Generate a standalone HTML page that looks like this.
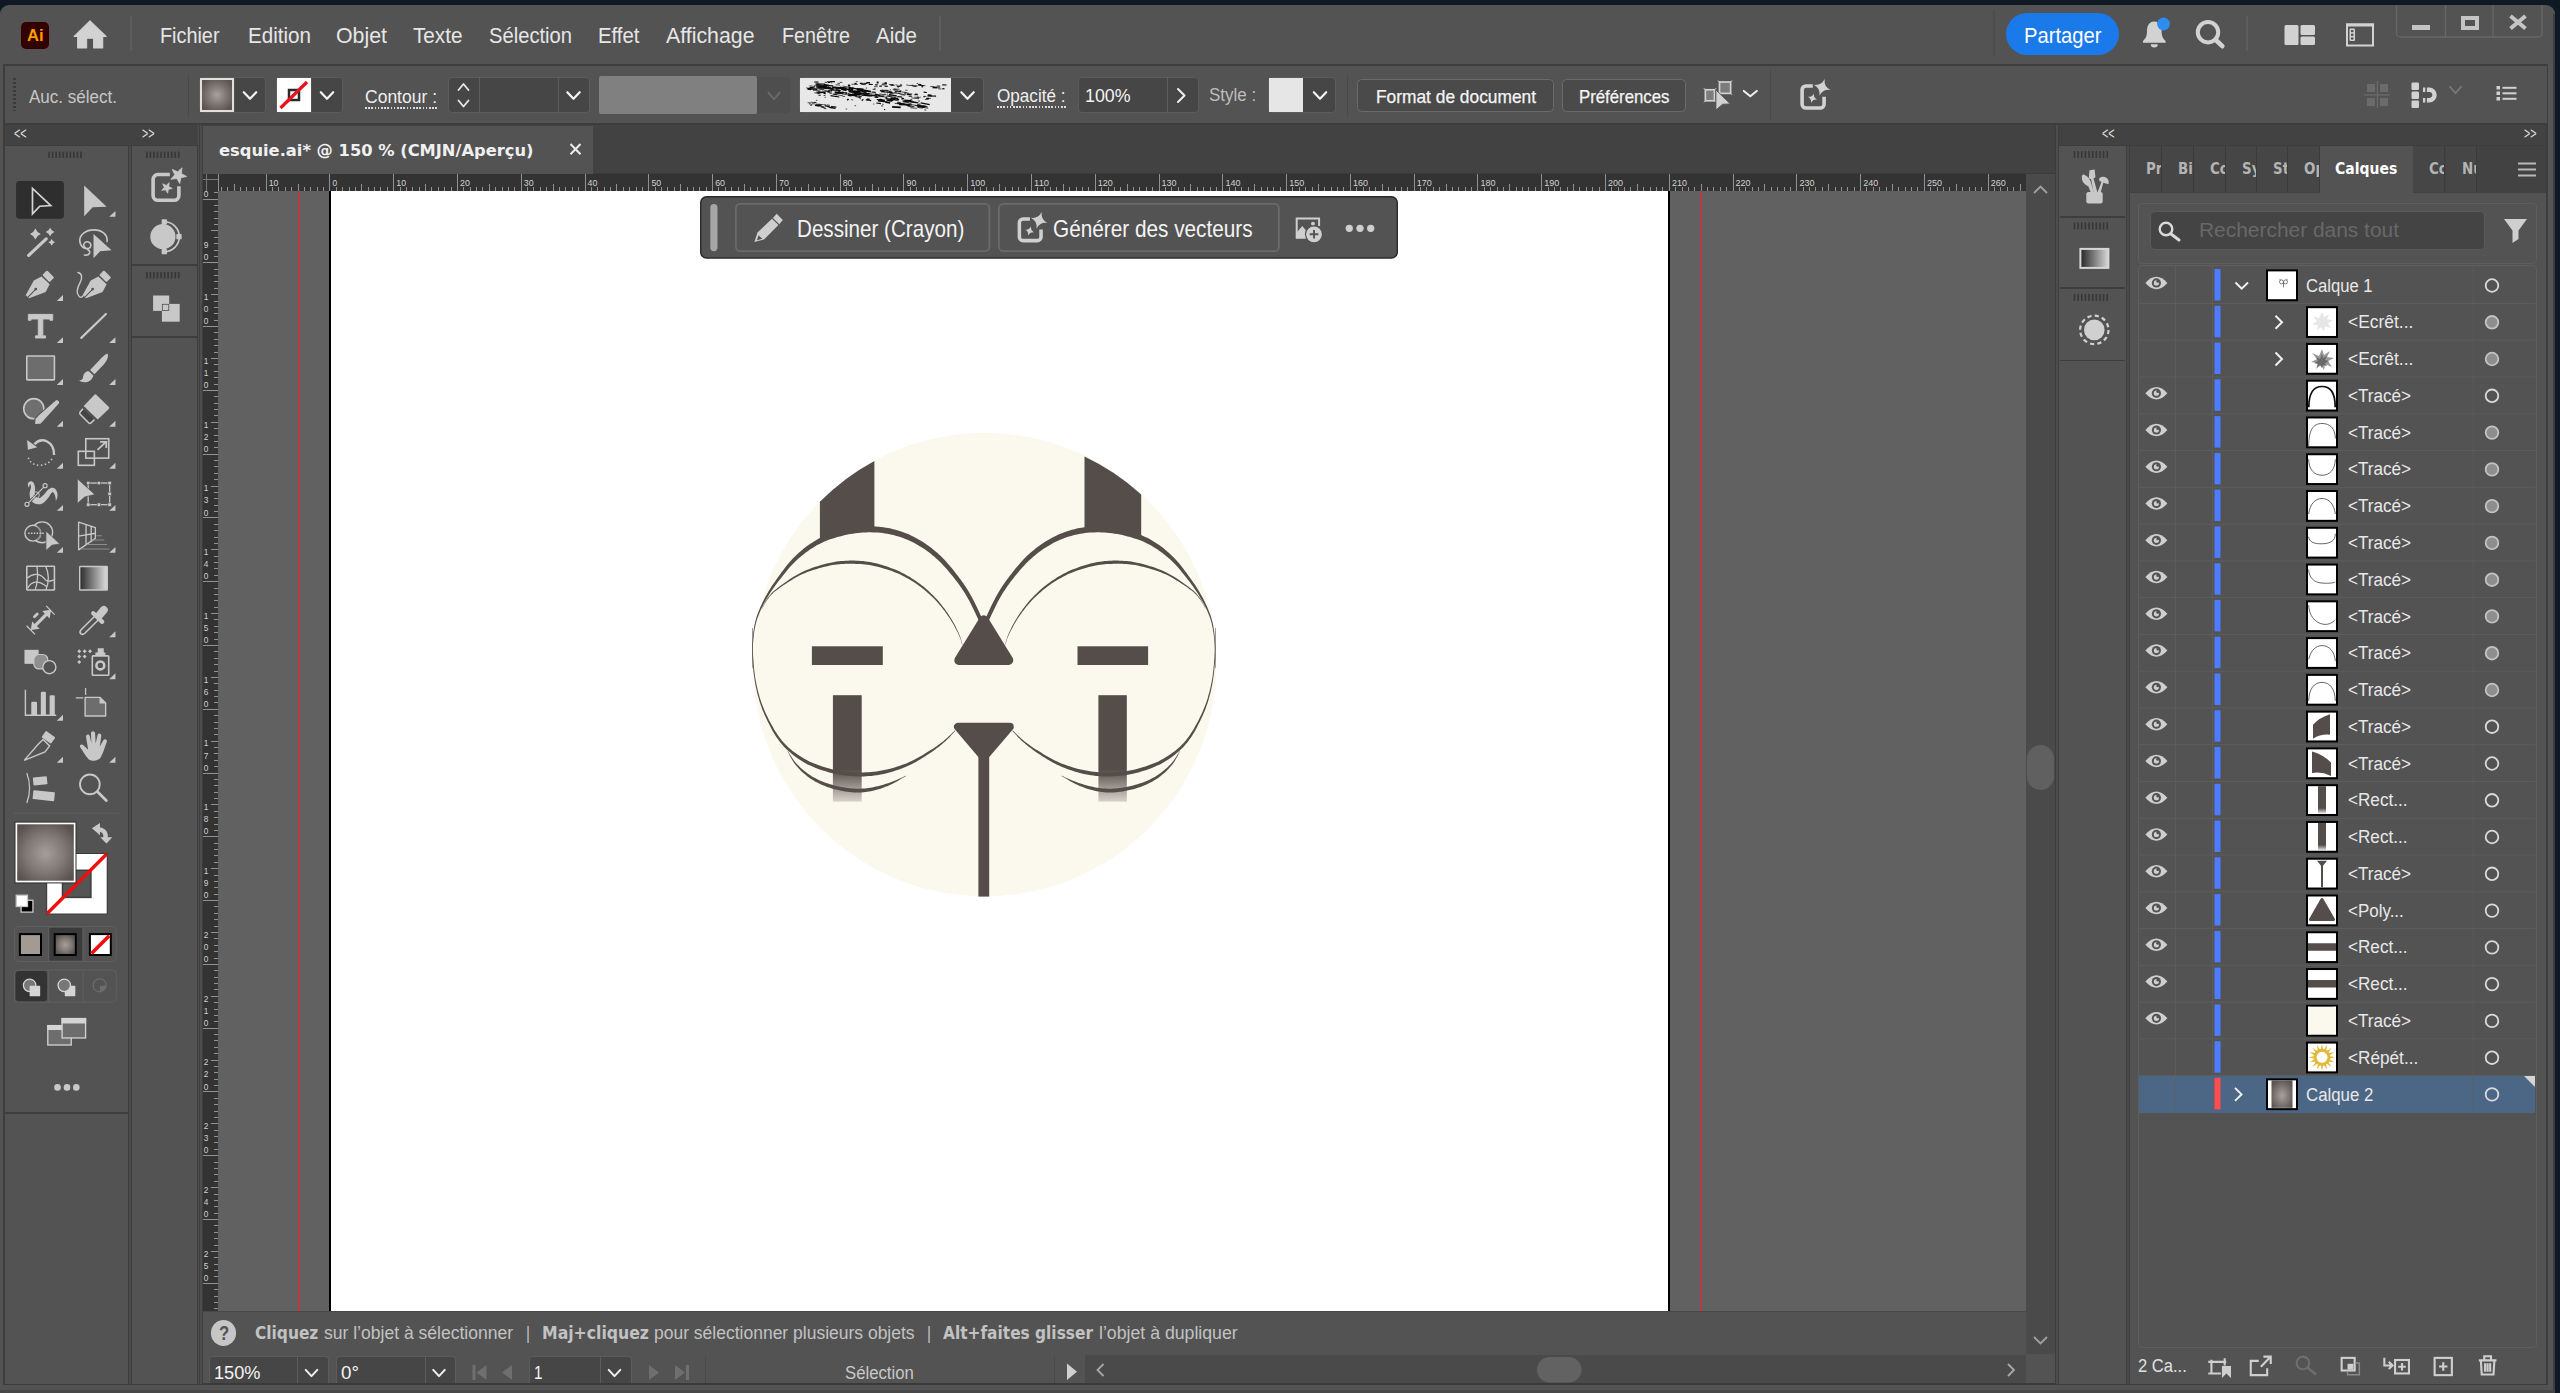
<!DOCTYPE html>
<html lang="fr"><head><meta charset="utf-8"><title>esquie.ai @ 150 % (CMJN/Aperçu)</title><style>
html,body{margin:0;padding:0;}
body{width:2560px;height:1393px;overflow:hidden;background:#535353;position:relative;font-family:"Liberation Sans",sans-serif;}
.a{position:absolute;box-sizing:border-box;}
.t{position:absolute;white-space:nowrap;transform-origin:0 0;display:block;font-family:"Liberation Sans",sans-serif;}
.d{font-family:"DejaVu Sans",sans-serif;}
.dc{font-family:"DejaVu Sans Condensed","DejaVu Sans",sans-serif;}
svg{position:absolute;overflow:visible;}
</style></head><body>
<!-- p_frame -->
<div class="a" style="left:0px;top:0px;width:2560px;height:1393px;background:#0f1923;"></div>
<div class="a" style="left:0px;top:5px;width:2555px;height:1388px;background:#535353;border-radius:9px 9px 0 0;"></div>
<div class="a" style="left:2553px;top:14px;width:2px;height:1379px;background:#3a3d41;"></div>
<div class="a" style="left:0px;top:1390px;width:2555px;height:3px;background:#474747;"></div>
<div class="a" style="left:3px;top:64px;width:2545px;height:1321px;background:#3d3d3d;"></div>
<div class="a" style="left:5px;top:66px;width:2542px;height:57px;background:#535353;"></div>
<div class="a" style="left:5px;top:125px;width:193px;height:20px;background:#424242;"></div>
<div class="a" style="left:5px;top:146px;width:123px;height:1238px;background:#535353;"></div>
<div class="a" style="left:5px;top:1112px;width:123px;height:2px;background:#3d3d3d;"></div>
<div class="a" style="left:128px;top:146px;width:4px;height:1238px;background:#4a4a4a;"></div>
<div class="a" style="left:128px;top:146px;width:1px;height:1238px;background:#3d3d3d;"></div>
<div class="a" style="left:131px;top:146px;width:1px;height:1238px;background:#3d3d3d;"></div>
<div class="a" style="left:132px;top:146px;width:65px;height:1238px;background:#535353;"></div>
<div class="a" style="left:132px;top:264px;width:65px;height:2px;background:#3d3d3d;"></div>
<div class="a" style="left:132px;top:336px;width:65px;height:2px;background:#3d3d3d;"></div>
<div class="a" style="left:198px;top:125px;width:5px;height:1259px;background:#4d4d4d;"></div>
<div class="a" style="left:198.5px;top:125px;width:1.5px;height:1259px;background:#3d3d3d;"></div>
<div class="a" style="left:201.5px;top:125px;width:1.5px;height:1259px;background:#3d3d3d;"></div>
<div class="a" style="left:203px;top:125px;width:1852px;height:48px;background:#424242;"></div>
<div class="a" style="left:203px;top:126px;width:390px;height:48px;background:#535353;"></div>
<div class="a" style="left:593px;top:172.5px;width:1462px;height:1.5px;background:#3a3a3a;"></div>
<div class="a" style="left:203px;top:174px;width:1823px;height:17px;background:#333;"></div>
<div class="a" style="left:203px;top:191px;width:15px;height:1120px;background:#333;"></div>
<div class="a" style="left:218px;top:191px;width:1808px;height:1120px;background:#616161;"></div>
<div class="a" style="left:2026px;top:174px;width:29px;height:1180px;background:#4a4a4a;"></div>
<div class="a" style="left:203px;top:1311px;width:1823px;height:43px;background:#535353;"></div>
<div class="a" style="left:203px;top:1311px;width:1823px;height:1px;background:#484848;"></div>
<div class="a" style="left:203px;top:1354px;width:1852px;height:29px;background:#535353;"></div>
<div class="a" style="left:2026px;top:1354px;width:29px;height:29px;background:#535353;"></div>
<div class="a" style="left:2055px;top:125px;width:4px;height:1259px;background:#4d4d4d;"></div>
<div class="a" style="left:2055px;top:125px;width:1px;height:1259px;background:#3d3d3d;"></div>
<div class="a" style="left:2058px;top:125px;width:1px;height:1259px;background:#3d3d3d;"></div>
<div class="a" style="left:2059px;top:125px;width:487px;height:20px;background:#424242;"></div>
<div class="a" style="left:2059px;top:146px;width:67px;height:1238px;background:#535353;"></div>
<div class="a" style="left:2126px;top:146px;width:4px;height:1238px;background:#4a4a4a;"></div>
<div class="a" style="left:2126px;top:146px;width:1px;height:1238px;background:#3d3d3d;"></div>
<div class="a" style="left:2129px;top:146px;width:1px;height:1238px;background:#3d3d3d;"></div>
<div class="a" style="left:2130px;top:146px;width:416px;height:47px;background:#424242;"></div>
<div class="a" style="left:2130px;top:193px;width:416px;height:1191px;background:#535353;"></div>
<div class="a" style="left:2548px;top:64px;width:5px;height:1326px;background:#555;"></div>
<!-- p_menu -->
<div class="a" style="left:21px;top:22px;width:28px;height:27px;background:#330000;border-radius:5px;"></div>
<span class="t" style="left:27px;top:27px;font-size:16.5px;line-height:16.5px;color:#ff9a00;font-weight:700;transform:scaleX(1.0000);">Ai</span>
<div class="a" style="left:130px;top:16px;width:2px;height:35px;background:#5d5d5d;"></div>
<div class="a" style="left:939px;top:16px;width:2px;height:35px;background:#5d5d5d;"></div>
<div class="a" style="left:2246px;top:16px;width:2px;height:35px;background:#5d5d5d;"></div>
<div class="a" style="left:1993px;top:10px;width:2px;height:46px;background:#4d4d4d;"></div>
<span class="t" style="left:159.5px;top:25px;font-size:22px;line-height:22px;color:#e6e6e6;transform:scaleX(0.9013);">Fichier</span>
<span class="t" style="left:247.5px;top:25px;font-size:22px;line-height:22px;color:#e6e6e6;transform:scaleX(0.9364);">Edition</span>
<span class="t" style="left:336px;top:25px;font-size:22px;line-height:22px;color:#e6e6e6;transform:scaleX(0.9697);">Objet</span>
<span class="t" style="left:413px;top:25px;font-size:22px;line-height:22px;color:#e6e6e6;transform:scaleX(0.9412);">Texte</span>
<span class="t" style="left:488.5px;top:25px;font-size:22px;line-height:22px;color:#e6e6e6;transform:scaleX(0.9170);">Sélection</span>
<span class="t" style="left:598px;top:25px;font-size:22px;line-height:22px;color:#e6e6e6;transform:scaleX(0.9251);">Effet</span>
<span class="t" style="left:665.5px;top:25px;font-size:22px;line-height:22px;color:#e6e6e6;transform:scaleX(0.9689);">Affichage</span>
<span class="t" style="left:781.5px;top:25px;font-size:22px;line-height:22px;color:#e6e6e6;transform:scaleX(0.8968);">Fenêtre</span>
<span class="t" style="left:875.5px;top:25px;font-size:22px;line-height:22px;color:#e6e6e6;transform:scaleX(0.9308);">Aide</span>
<div class="a" style="left:2006px;top:12.5px;width:113px;height:42.5px;background:#1b7aea;border-radius:21.500px;"></div>
<span class="t" style="left:2024px;top:25px;font-size:22px;line-height:22px;color:#ffffff;transform:scaleX(0.9183);">Partager</span>
<svg width="2560" height="130" style="left:0;top:0" viewBox="0 0 2560 130"><g transform="scale(0.12563)" fill="#d2d2d2"><path d="M716 166 L590 290 L618 290 L618 382 L690 382 L690 305 L745 305 L745 382 L818 382 L818 290 L845 290 Z" stroke="#d2d2d2" stroke-width="8" stroke-linejoin="round"/></g><g fill="#d2d2d2"><path d="M2154.300 21.500 c-5.300 0 -7.300 4.500 -7.300 9.500 c0 5.500 -1.500 7.500 -4 10 v1.800 h22.600 v-1.800 c-2.500 -2.500 -4 -4.500 -4 -10 c0 -5 -2 -9.500 -7.300 -9.500 z"/><path d="M2150.800 44.300 a3.500 3.200 0 0 0 7 0 z"/><circle cx="2163.500" cy="24" r="6.400" fill="#2d8cf0"/></g><g fill="none" stroke="#d2d2d2" stroke-linecap="round"><circle cx="2208" cy="32.200" r="10.200" stroke-width="4"/><path d="M2215.800 40 L2222.300 46.200" stroke-width="4.600"/></g><g fill="#d2d2d2"><rect x="2284.500" y="25" width="14" height="20" rx="1.500"/><rect x="2300.500" y="25" width="14.500" height="10" rx="1.500"/><rect x="2300.500" y="36.500" width="14.500" height="8.500" rx="1.500"/></g><g><rect x="2347" y="24.500" width="26" height="21" fill="none" stroke="#d2d2d2" stroke-width="2"/><rect x="2346" y="23.500" width="28" height="3" fill="#d2d2d2"/><rect x="2349.500" y="28.500" width="5.500" height="12.500" rx="1" fill="#d2d2d2"/><rect x="2351" y="30" width="2.500" height="2.200" fill="#535353"/><rect x="2351" y="33.700" width="2.500" height="2.200" fill="#535353"/><rect x="2351" y="37.400" width="2.500" height="2.200" fill="#535353"/></g><path d="M2396.500 5 V33 a4 4 0 0 0 4 4 H2538 a4 4 0 0 0 4 -4 V5 M2445.500 5 V37 M2493 5 V37" fill="none" stroke="#676767" stroke-width="1.300"/><rect x="2412" y="25" width="18" height="5" fill="#c4c4c4"/><rect x="2463" y="18" width="14" height="10" fill="none" stroke="#c4c4c4" stroke-width="4"/><path d="M2510.500 16 L2525.500 28.500 M2525.500 16 L2510.500 28.500" stroke="#c4c4c4" stroke-width="4" fill="none"/></svg>
<!-- p_control -->
<div class="a" style="left:13px;top:78px;width:3px;height:33px;background:repeating-linear-gradient(to bottom,#3a3a3a 0,#3a3a3a 2px,transparent 2px,transparent 4px);"></div>
<span class="t" style="left:29px;top:89px;font-size:17.5px;line-height:17.5px;color:#c6c6c6;transform:scaleX(0.9727);">Auc. sélect.</span>
<div class="a" style="left:188px;top:74px;width:1px;height:44px;background:#4a4a4a;"></div>
<div class="a" style="left:199px;top:77px;width:67px;height:36px;border:1px solid #5c5c5c;border-radius:4px;"></div>
<div class="a" style="left:235px;top:78px;width:30px;height:34px;background:#464646;border-radius:0 3px 3px 0;"></div>
<div class="a" style="left:200px;top:78px;width:34px;height:34px;border:2px solid #e2e0dc;background:radial-gradient(circle at 50% 50%,#a8a19d 0%,#7d7672 45%,#5b5450 85%);"></div>
<div class="a" style="left:276px;top:77px;width:67px;height:36px;border:1px solid #5c5c5c;border-radius:4px;"></div>
<div class="a" style="left:312px;top:78px;width:30px;height:34px;background:#464646;border-radius:0 3px 3px 0;"></div>
<div class="a" style="left:277px;top:78px;width:34px;height:34px;background:#ffffff;"></div>
<span class="t" style="left:365px;top:89px;font-size:17.5px;line-height:17.5px;color:#efefef;transform:scaleX(1.0002);">Contour :</span>
<div class="a" style="left:365px;top:107px;width:72px;height:2px;background:repeating-linear-gradient(to right,#dcdcdc 0,#dcdcdc 1.600px,transparent 1.600px,transparent 3.200px);"></div>
<div class="a" style="left:448px;top:77px;width:142px;height:36px;background:#464646;border:1px solid #5c5c5c;border-radius:4px;"></div>
<div class="a" style="left:479px;top:78px;width:1px;height:34px;background:#5c5c5c;"></div>
<div class="a" style="left:558px;top:78px;width:1px;height:34px;background:#5c5c5c;"></div>
<div class="a" style="left:599px;top:76px;width:158px;height:38px;background:#808080;border-radius:2px;"></div>
<div class="a" style="left:757px;top:77px;width:33px;height:36px;background:#4e4e4e;border-radius:0 4px 4px 0;"></div>
<div class="a" style="left:799px;top:77px;width:185px;height:36px;background:#464646;border:1px solid #5c5c5c;border-radius:4px;"></div>
<div class="a" style="left:800px;top:78px;width:151px;height:34px;background:#e8e8e8;"></div>
<span class="t" style="left:997px;top:88px;font-size:17.5px;line-height:17.5px;color:#efefef;transform:scaleX(0.9779);">Opacité :</span>
<div class="a" style="left:997px;top:106px;width:68.5px;height:2px;background:repeating-linear-gradient(to right,#dcdcdc 0,#dcdcdc 1.600px,transparent 1.600px,transparent 3.200px);"></div>
<div class="a" style="left:1078px;top:77px;width:121px;height:36px;background:#464646;border:1px solid #5c5c5c;border-radius:4px;"></div>
<div class="a" style="left:1167px;top:78px;width:1px;height:34px;background:#5c5c5c;"></div>
<span class="t" style="left:1084.5px;top:88px;font-size:17.5px;line-height:17.5px;color:#f4f4f4;transform:scaleX(1.0164);">100%</span>
<span class="t" style="left:1208.7px;top:87px;font-size:17.5px;line-height:17.5px;color:#bdbdbd;transform:scaleX(0.9724);">Style :</span>
<div class="a" style="left:1268px;top:77px;width:68px;height:36px;background:#464646;border:1px solid #5c5c5c;border-radius:4px;"></div>
<div class="a" style="left:1269px;top:78px;width:34px;height:34px;background:#e6e6e6;"></div>
<div class="a" style="left:1347px;top:74px;width:1px;height:44px;background:#4a4a4a;"></div>
<div class="a" style="left:1357px;top:79px;width:196.5px;height:33px;background:#4a4a4a;border:1.500px solid #6b6b6b;border-radius:4.500px;"></div>
<span class="t" style="left:1375.5px;top:89px;font-size:17.8px;line-height:17.8px;color:#f4f4f4;transform:scaleX(0.9752);-webkit-text-stroke:0.250px #f4f4f4;">Format de document</span>
<div class="a" style="left:1562px;top:79px;width:124px;height:33px;background:#4a4a4a;border:1.500px solid #6b6b6b;border-radius:4.500px;"></div>
<span class="t" style="left:1579px;top:89px;font-size:17.8px;line-height:17.8px;color:#f4f4f4;transform:scaleX(0.9439);-webkit-text-stroke:0.250px #f4f4f4;">Préférences</span>
<div class="a" style="left:1770px;top:70px;width:1px;height:50px;background:#4a4a4a;"></div>
<svg width="2560" height="130" style="left:0;top:0" viewBox="0 0 2560 130"><rect x="289" y="90" width="10" height="10" fill="none" stroke="#2a2a2a" stroke-width="2.500"/><path d="M280.500 108 L307 82" stroke="#e8121b" stroke-width="3.200" fill="none"/><path d="M243.8 92.2 L250 98.8 L256.2 92.2" fill="none" stroke="#f4f4f4" stroke-width="2.2" stroke-linecap="round" stroke-linejoin="round"/><path d="M320.8 92.2 L327 98.8 L333.2 92.2" fill="none" stroke="#f4f4f4" stroke-width="2.2" stroke-linecap="round" stroke-linejoin="round"/><path d="M567.3 92.2 L573.5 98.8 L579.7 92.2" fill="none" stroke="#f4f4f4" stroke-width="2.2" stroke-linecap="round" stroke-linejoin="round"/><path d="M961.3 92.2 L967.5 98.8 L973.7 92.2" fill="none" stroke="#f4f4f4" stroke-width="2.2" stroke-linecap="round" stroke-linejoin="round"/><path d="M1313.8 92.2 L1320 98.8 L1326.2 92.2" fill="none" stroke="#f4f4f4" stroke-width="2.2" stroke-linecap="round" stroke-linejoin="round"/><path d="M768.5 92.8 L774 99.2 L779.5 92.8" fill="none" stroke="#6a6a6a" stroke-width="2" stroke-linecap="round" stroke-linejoin="round"/><path d="M458.5 90 L463.5 84 L468.5 90" fill="none" stroke="#e8e8e8" stroke-width="1.8" stroke-linecap="round" stroke-linejoin="round"/><path d="M458.5 100.5 L463.5 106.5 L468.5 100.5" fill="none" stroke="#e8e8e8" stroke-width="1.8" stroke-linecap="round" stroke-linejoin="round"/><path d="M1178 89 L1184.500 95.500 L1178 102" fill="none" stroke="#f0f0f0" stroke-width="2" stroke-linecap="round" stroke-linejoin="round"/><path d="M1743.8 90.9 L1750.3 96.3 L1756.8 90.9" fill="none" stroke="#f0f0f0" stroke-width="2" stroke-linecap="round" stroke-linejoin="round"/><path d="M816.8 87.9l7.6 1.3M824.1 92.2l1.9 0.2M865.7 94.4l6.5 0.8M842.3 92.6l2.0 0.4M806.1 87.8l5.0 1.1M814.4 92.7l6.2 1.2M816.0 85.2l7.2 0.5M817.6 93.5l1.9 0.4M819.4 89.1l4.7 0.4M917.7 105.1l8.1 0.7M830.5 90.2l4.0 0.4M907.5 106.3l6.0 0.7M813.9 88.2l7.9 1.2M911.5 106.4l3.0 0.2M857.3 96.1l4.3 0.6M920.2 106.9l8.1 1.4M809.4 85.8l6.0 0.8M886.3 96.2l8.4 0.8M840.6 92.1l6.6 0.6M837.8 92.8l3.6 0.3M918.9 103.8l1.7 0.4M808.2 88.5l1.7 0.3M822.2 91.0l1.9 0.3M878.4 95.8l8.7 1.5M860.6 91.8l2.8 0.1M910.2 107.8l6.9 0.5M907.1 104.4l5.0 0.8M842.8 88.6l8.3 1.7M815.5 85.3l7.3 1.0M899.1 102.5l2.0 0.4M917.4 107.4l5.4 0.8M837.0 92.6l5.0 0.4M912.4 102.1l2.5 0.5M834.8 92.0l4.8 0.5M879.4 93.9l6.1 1.2M891.2 99.4l7.6 1.6M842.2 93.8l9.0 1.8M833.5 90.2l6.9 0.7M827.7 91.8l2.0 0.1M869.4 93.7l2.6 0.2M902.6 101.8l8.9 1.9M813.1 90.1l7.2 0.8M865.3 95.3l4.7 0.7M886.6 100.3l4.9 0.9M828.4 88.9l2.7 0.4M908.7 104.2l8.0 1.3M835.7 94.5l7.3 1.4M894.0 97.6l2.0 0.2M835.5 84.8l4.5 0.3M838.6 91.3l1.6 0.1M855.4 96.6l5.1 1.1M875.4 96.3l2.4 0.4M858.4 95.8l3.5 0.5M895.5 93.0l8.6 1.5M846.9 89.5l3.7 0.5M832.0 89.5l8.1 0.9M842.5 86.0l7.6 1.4M842.6 87.8l8.5 0.5M815.5 83.4l9.4 0.5M854.5 84.4l3.2 0.1M899.5 86.3l2.0 0.0M862.3 84.5l3.4 0.1M855.8 81.6l2.0 0.1M824.7 82.2l1.4 0.0M938.2 88.8l3.3 0.2M916.6 83.4l1.4 0.1M860.8 84.3l3.7 0.1M874.0 86.7l3.6 0.0M906.3 85.0l1.9 0.1M815.4 84.4l1.8 0.1M862.9 83.8l3.2 0.1M865.0 83.5l1.8 0.1M936.9 85.9l3.3 0.1M837.4 83.3l2.6 0.1M825.7 82.6l1.5 0.0M913.7 86.4l2.3 0.1M921.3 85.5l4.1 0.2M895.5 84.9l1.8 0.0M888.9 84.5l4.7 0.1M851.5 84.2l3.3 0.2M885.2 84.2l1.3 0.0M863.6 83.2l3.4 0.2M839.9 82.3l2.5 0.1M881.6 84.7l2.1 0.1M897.4 87.1l1.6 0.1M882.4 83.3l4.6 0.1M908.3 85.4l4.6 0.2M911.7 85.2l1.3 0.0M882.4 84.7l2.6 0.1M826.8 81.6l4.2 0.1M937.6 87.7l2.2 0.1M930.4 86.5l4.3 0.1M890.1 85.2l4.6 0.1M935.4 86.8l4.9 0.2M888.3 96.2l2.0 0.3M882.5 90.4l5.4 0.2M914.2 97.2l5.7 0.5M883.8 94.1l2.5 0.3M924.8 99.4l3.9 0.2M897.3 91.5l3.6 0.4M907.2 93.8l5.0 0.2M916.9 96.9l2.2 0.2M893.9 88.8l5.6 0.5M904.5 92.6l4.3 0.6M901.3 91.9l5.2 0.6M929.0 98.4l1.8 0.2M884.6 90.1l3.9 0.4M881.2 91.5l3.5 0.3M905.3 90.2l2.2 0.1M872.6 89.3l2.6 0.3M886.4 91.0l5.1 0.3M873.8 88.7l2.1 0.3M900.4 94.5l4.8 0.8M898.2 93.2l2.2 0.3M894.4 92.1l2.5 0.2M872.1 94.0l4.7 0.3M892.6 89.3l4.1 0.2M893.6 90.2l4.9 0.3M881.4 90.0l2.0 0.1M923.5 96.6l1.4 0.2M887.0 94.0l1.1 0.1M894.4 95.8l2.3 0.2M890.2 92.5l4.9 0.5M894.4 92.8l1.8 0.2M889.4 92.8l3.1 0.3M913.8 94.7l4.3 0.2M887.4 95.5l4.6 0.4M923.7 96.3l2.7 0.2M911.3 97.8l5.8 0.8M909.2 96.4l3.0 0.1M890.3 93.5l3.5 0.2M895.0 91.5l4.3 0.3M814.9 104.7l3.4 0.3M824.2 104.4l1.6 0.2M807.6 102.7l3.3 0.2M821.2 104.6l2.6 0.1M810.8 102.2l5.8 0.7M816.7 104.0l5.2 1.1M829.6 107.6l1.7 0.1M814.0 102.3l2.2 0.2M823.7 108.6l2.6 0.1M820.6 106.9l5.2 1.2M818.8 104.1l2.8 0.5M812.2 103.6l2.6 0.3M808.9 103.8l3.5 0.7M810.2 105.3l1.7 0.2M826.7 104.8l3.3 0.6M827.6 106.9l3.2 0.6M921.6 106.7l1.5 0.2M917.3 106.9l2.5 0.1M823.6 95.4l2.0 0.3M848.0 95.0l0.8 0.1M852.9 91.2l2.2 0.1M881.0 105.8l2.1 0.3M889.8 89.7l1.0 0.1M917.4 98.6l1.2 0.1M847.2 100.3l1.0 0.1M836.2 93.5l1.6 0.1M815.9 100.3l1.3 0.1M865.6 100.0l2.5 0.1M865.7 88.0l1.5 0.1M909.4 105.8l2.2 0.3M813.1 90.1l1.1 0.0M851.3 94.4l1.7 0.1M920.3 97.2l0.8 0.1M901.1 99.0l2.2 0.3M923.4 96.8l1.0 0.1M891.1 98.4l0.8 0.1M854.7 105.6l1.4 0.2M851.9 91.4l1.3 0.2M820.8 87.6l1.4 0.2M895.5 91.7l1.1 0.0M850.3 92.0l1.5 0.0M859.5 98.6l1.5 0.2M841.4 92.5l2.0 0.3M831.1 82.8l1.1 0.1M908.5 96.2l1.8 0.1M889.3 94.0l1.6 0.2M854.2 95.5l1.8 0.2M882.1 104.2l1.6 0.2M917.1 104.4l2.5 0.3M894.7 103.4l2.5 0.2M824.6 97.3l1.2 0.2M917.8 100.9l2.2 0.3M924.3 110.0l2.0 0.1M862.2 99.5l1.7 0.2M842.2 92.1l1.7 0.2M837.8 91.4l2.2 0.3M873.2 104.0l1.1 0.1M814.2 85.5l1.4 0.2M818.3 95.4l2.5 0.1M910.8 100.1l1.9 0.2M849.1 90.8l1.3 0.1M879.4 96.2l1.0 0.1M824.8 88.6l1.0 0.1M851.1 99.7l2.0 0.2M845.7 109.0l1.5 0.1M849.8 89.5l2.0 0.1M842.8 96.3l2.3 0.2M917.4 98.3l1.5 0.2" stroke="#0b0b0b" stroke-width="0.7" fill="none"/><path d="M858.0 90.0l5.0 0.7M827.2 88.0l5.3 0.9M919.0 105.6l8.7 1.4M809.5 87.3l5.0 0.6M920.7 102.9l9.0 1.8M903.4 104.0l4.4 1.0M870.3 95.4l7.0 0.5M816.4 92.1l5.9 0.5M827.0 91.6l2.7 0.6M810.5 88.9l6.8 0.6M874.6 97.1l3.7 0.3M847.6 93.7l8.2 1.8M886.6 98.8l8.7 0.5M861.5 95.2l9.0 0.6M890.8 98.1l8.3 1.5M854.0 93.1l7.4 1.5M877.9 95.8l6.1 0.4M890.5 97.9l7.8 0.5M910.2 101.9l8.2 0.9M907.2 100.5l3.9 0.3M878.0 100.3l5.2 0.5M887.5 99.9l5.8 0.6M888.1 100.5l4.1 0.7M876.7 99.5l7.2 0.8M877.9 100.9l8.3 1.0M889.0 94.6l7.6 1.2M830.5 95.7l8.8 1.3M844.5 93.0l2.6 0.4M902.6 100.8l6.7 1.4M915.2 105.5l5.4 0.5M879.5 99.2l5.4 1.1M841.8 89.0l8.3 0.7M867.6 93.3l1.7 0.4M852.1 93.8l7.5 1.1M899.8 103.7l3.9 0.3M828.3 90.6l3.9 0.4M818.1 91.9l7.0 0.5M866.9 99.0l2.7 0.2M901.7 98.3l2.4 0.3M917.4 106.5l7.2 1.0M875.0 94.2l5.3 1.2M909.1 101.1l8.1 1.4M807.2 88.8l4.2 0.7M832.7 94.0l4.0 0.7M867.3 95.2l4.4 1.0M886.6 99.9l1.7 0.3M849.2 94.9l8.3 1.2M917.2 105.4l5.8 1.3M824.4 90.9l5.0 0.4M876.3 103.0l4.7 0.7M848.0 95.3l3.6 0.6M866.2 99.6l5.0 1.1M829.4 92.9l2.4 0.3M819.1 87.1l8.2 1.5M863.3 92.6l3.4 0.3M816.8 84.5l7.4 0.8M816.2 86.9l7.4 1.3M835.8 89.7l4.8 0.9M816.4 86.6l6.4 1.0M816.6 84.5l7.9 0.7M851.7 87.9l9.6 1.9M857.0 90.1l5.1 0.5M864.3 93.2l5.5 0.6M834.2 87.3l5.7 0.4M861.3 91.4l5.0 0.2M841.3 88.4l6.0 0.7M853.5 88.5l9.9 1.1M823.4 85.3l9.8 0.5M818.4 86.0l7.5 1.3M891.3 85.1l2.1 0.0M896.8 86.2l3.1 0.1M814.2 82.0l4.3 0.2M884.6 86.2l3.1 0.1M854.5 83.4l2.2 0.1M921.5 86.7l1.4 0.1M933.7 87.4l2.7 0.1M866.1 82.8l3.8 0.2M899.8 85.1l2.3 0.1M827.8 82.4l2.5 0.1M859.8 83.3l3.0 0.1M942.3 84.9l4.3 0.1M830.1 81.5l4.9 0.1M920.3 85.5l3.4 0.1M942.3 88.7l2.2 0.1M875.1 84.8l2.6 0.1M912.5 85.8l5.0 0.2M867.2 82.5l2.7 0.1M879.3 86.2l2.6 0.0M932.5 87.7l4.9 0.2M868.8 84.4l4.0 0.1M915.0 94.0l2.6 0.4M881.2 91.6l5.0 0.4M881.6 96.5l1.2 0.1M897.3 96.5l4.9 0.6M907.0 94.3l4.6 0.5M886.3 92.2l5.0 0.2M879.9 90.6l4.5 0.6M904.2 93.8l2.2 0.2M910.3 99.8l1.3 0.1M923.6 92.2l3.3 0.3M889.1 91.8l3.2 0.5M928.1 94.9l2.8 0.4M926.2 98.3l2.9 0.1M871.5 92.0l4.2 0.4M930.5 95.9l5.6 0.3M829.2 107.2l4.0 0.4M830.5 107.6l5.0 0.9M816.2 104.9l4.4 0.7M815.0 105.3l4.7 0.9M831.1 106.7l5.2 0.4M819.4 105.6l1.8 0.1M824.6 105.7l4.9 1.0M820.8 106.5l3.4 0.6M831.2 89.8l0.8 0.1M885.5 102.5l1.9 0.1M856.4 92.1l2.4 0.1M846.9 99.4l2.1 0.1M884.0 109.5l1.2 0.1M823.5 93.5l2.2 0.2M858.8 97.3l1.6 0.1M861.6 100.2l1.3 0.1" stroke="#0b0b0b" stroke-width="1.2" fill="none"/><path d="M904.3 100.5l6.3 0.4M848.7 87.8l5.1 0.8M834.7 92.5l8.6 0.7M885.5 98.2l1.8 0.1M897.2 103.0l6.6 1.4M828.8 88.1l4.7 0.9M902.3 104.0l7.9 1.4M885.5 101.9l4.6 1.0M808.0 88.7l3.0 0.5M899.1 104.2l7.2 0.4M824.0 87.5l7.2 0.8M892.1 106.9l8.6 0.5M832.1 87.3l7.0 1.0M854.2 92.9l4.3 0.4M823.8 84.8l5.4 0.9M848.6 91.2l6.8 1.2M835.9 88.1l5.6 0.3M855.4 91.9l3.5 0.3M856.6 88.9l6.9 0.5M853.3 91.2l7.4 0.5M848.3 89.7l4.7 0.4M841.2 89.1l5.4 1.1M839.6 87.4l6.8 1.1M863.2 90.2l7.7 1.4M858.7 92.9l9.2 1.9M822.3 86.5l4.5 0.4M847.9 85.5l2.4 0.1M876.7 82.5l1.9 0.0M918.2 84.8l3.1 0.1M884.6 83.2l2.1 0.1M899.3 91.1l1.9 0.3M927.5 95.6l4.2 0.2" stroke="#0b0b0b" stroke-width="1.9" fill="none"/><g transform="translate(1690 70) scale(0.0625)"><rect x="246" y="316" width="146" height="176" fill="#7c7c7c" stroke="#d2d2d2" stroke-width="27"/><path d="M246 316 l-24 -24" stroke="#d2d2d2" stroke-width="16"/><path d="M392 316 l24 -24" stroke="#d2d2d2" stroke-width="16"/><path d="M246 492 l-24 24" stroke="#d2d2d2" stroke-width="16"/><path d="M392 492 l24 24" stroke="#d2d2d2" stroke-width="16"/><rect x="472" y="192" width="178" height="182" fill="#7c7c7c" stroke="#d2d2d2" stroke-width="27"/><path d="M472 192 l-24 -24" stroke="#d2d2d2" stroke-width="16"/><path d="M650 192 l24 -24" stroke="#d2d2d2" stroke-width="16"/><path d="M472 374 l-24 24" stroke="#d2d2d2" stroke-width="16"/><path d="M650 374 l24 24" stroke="#d2d2d2" stroke-width="16"/><path d="M415 318 L415 638 L522 548 L645 542 Z" fill="#d2d2d2" stroke="#535353" stroke-width="14"/></g><g transform="translate(1800.3 84.2) scale(1)"><path d="M12.5 1.8 H5.6 a3.8 3.8 0 0 0 -3.8 3.8 V20 a3.8 3.8 0 0 0 3.8 3.8 H20 a3.8 3.8 0 0 0 3.8 -3.8 V12.5" fill="none" stroke="#d2d2d2" stroke-width="3.600"/><path d="M24.37 -5.22Q23.35 2.37 30.22 5.77Q22.63 4.75 19.23 11.62Q20.25 4.03 13.38 0.63Q20.97 1.65 24.37 -5.22Z" fill="#d2d2d2"/><path d="M13.66 9.22Q13.08 13.53 16.98 15.46Q12.67 14.88 10.74 18.78Q11.32 14.47 7.42 12.54Q11.73 13.12 13.66 9.22Z" fill="#d2d2d2"/></g><g fill="#6b6b6b"><rect x="2367" y="84" width="8" height="8"/><rect x="2380" y="84" width="8" height="8"/><rect x="2367" y="98" width="8" height="8"/><rect x="2380" y="98" width="8" height="8"/><rect x="2364" y="94.300" width="26" height="1.300"/><rect x="2376.800" y="81" width="1.300" height="27"/></g><g fill="#d2d2d2"><rect x="2411.500" y="82.500" width="7.500" height="7.500" rx="1.200"/><rect x="2411.500" y="91.500" width="7.500" height="7.500" rx="1.200"/><rect x="2411.500" y="100.500" width="7.500" height="7.500" rx="1.200"/></g><path d="M2423 89.800 h6.300 a5.200 5.200 0 0 1 0 10.400 h-6.300" fill="none" stroke="#d2d2d2" stroke-width="4.400"/><rect x="2425.300" y="87" width="1.600" height="16" fill="#535353"/><path d="M2450 86.8 L2455.5 93.2 L2461 86.8" fill="none" stroke="#777" stroke-width="1.8" stroke-linecap="round" stroke-linejoin="round"/><g fill="#d2d2d2"><rect x="2496.500" y="86" width="3.500" height="3.500"/><rect x="2496.500" y="91.500" width="3.500" height="3.500"/><rect x="2496.500" y="97" width="3.500" height="3.500"/><rect x="2502.500" y="86.800" width="14" height="2"/><rect x="2502.500" y="92.300" width="14" height="2"/><rect x="2502.500" y="97.800" width="14" height="2"/></g></svg>
<!-- p_tools -->
<span class="t" style="left:14px;top:125px;font-size:17px;line-height:17px;color:#e4e4e4;transform:scaleX(0.6294);">&lt;&lt;</span>
<span class="t" style="left:141.5px;top:125px;font-size:17px;line-height:17px;color:#e4e4e4;transform:scaleX(0.6294);">&gt;&gt;</span>
<svg width="200" height="1393" style="left:0;top:0" viewBox="0 0 200 1393"><rect x="48.20" y="151.5" width="1.700" height="6.500" fill="#383838"/><rect x="51.75" y="151.5" width="1.700" height="6.500" fill="#383838"/><rect x="55.30" y="151.5" width="1.700" height="6.500" fill="#383838"/><rect x="58.85" y="151.5" width="1.700" height="6.500" fill="#383838"/><rect x="62.40" y="151.5" width="1.700" height="6.500" fill="#383838"/><rect x="65.95" y="151.5" width="1.700" height="6.500" fill="#383838"/><rect x="69.50" y="151.5" width="1.700" height="6.500" fill="#383838"/><rect x="73.05" y="151.5" width="1.700" height="6.500" fill="#383838"/><rect x="76.60" y="151.5" width="1.700" height="6.500" fill="#383838"/><rect x="80.15" y="151.5" width="1.700" height="6.500" fill="#383838"/><rect x="146.00" y="151.5" width="1.700" height="6.500" fill="#383838"/><rect x="149.55" y="151.5" width="1.700" height="6.500" fill="#383838"/><rect x="153.10" y="151.5" width="1.700" height="6.500" fill="#383838"/><rect x="156.65" y="151.5" width="1.700" height="6.500" fill="#383838"/><rect x="160.20" y="151.5" width="1.700" height="6.500" fill="#383838"/><rect x="163.75" y="151.5" width="1.700" height="6.500" fill="#383838"/><rect x="167.30" y="151.5" width="1.700" height="6.500" fill="#383838"/><rect x="170.85" y="151.5" width="1.700" height="6.500" fill="#383838"/><rect x="174.40" y="151.5" width="1.700" height="6.500" fill="#383838"/><rect x="177.95" y="151.5" width="1.700" height="6.500" fill="#383838"/><rect x="146.00" y="272" width="1.700" height="6.500" fill="#383838"/><rect x="149.55" y="272" width="1.700" height="6.500" fill="#383838"/><rect x="153.10" y="272" width="1.700" height="6.500" fill="#383838"/><rect x="156.65" y="272" width="1.700" height="6.500" fill="#383838"/><rect x="160.20" y="272" width="1.700" height="6.500" fill="#383838"/><rect x="163.75" y="272" width="1.700" height="6.500" fill="#383838"/><rect x="167.30" y="272" width="1.700" height="6.500" fill="#383838"/><rect x="170.85" y="272" width="1.700" height="6.500" fill="#383838"/><rect x="174.40" y="272" width="1.700" height="6.500" fill="#383838"/><rect x="177.95" y="272" width="1.700" height="6.500" fill="#383838"/><g transform="translate(10 175) scale(0.09331)"><rect x="65" y="65" width="513" height="403" rx="38" fill="#2e2e2e"/><path d="M241 143 L241 416 L319 335 L437 328 Z" fill="none" stroke="#d4d4d4" stroke-width="18" stroke-linejoin="miter"/><path d="M795 112 L795 443 L886 346 L1036 340 Z" fill="#c8c8c8"/><path d="M1063 448 H1130 V385 Z" fill="#c8c8c8"/><path d="M200 862 L388 684" stroke="#c8c8c8" stroke-width="34" stroke-linecap="round"/><path d="M272 574 Q288.24 615.76 330 632 Q288.24 648.24 272 690 Q255.76 648.24 214 632 Q255.76 615.76 272 574 Z" fill="#c8c8c8"/><path d="M430 564 Q442.88 597.12 476 610 Q442.88 622.88 430 656 Q417.12 622.88 384 610 Q417.12 597.12 430 564 Z" fill="#c8c8c8"/><path d="M447 686 Q457.08 711.92 483 722 Q457.08 732.08 447 758 Q436.92 732.08 411 722 Q436.92 711.92 447 686 Z" fill="#c8c8c8"/><path d="M895 632 L895 892 L966 818 L1088 806 Z" fill="#c8c8c8"/><path d="M1040 712 C1050 640 985 588 900 588 C810 588 745 640 748 705 C752 770 800 800 845 785 C880 770 870 720 830 715 C795 712 780 750 800 772 C825 800 860 800 855 830 C850 855 825 862 798 858" fill="none" stroke="#c8c8c8" stroke-width="17" stroke-linecap="round"/><path d="M255 1130 L338 1088 L425 1172 L382 1255 L205 1322 L168 1290 Z" fill="#c8c8c8"/><path d="M190 1312 L272 1228" stroke="#535353" stroke-width="11"/><circle cx="276" cy="1222" r="15" fill="#535353"/><rect x="-55" y="-36" width="110" height="72" rx="12" transform="translate(410 1085) rotate(45)" fill="#c8c8c8"/><path d="M501 1350 H568 V1287 Z" fill="#c8c8c8"/><path d="M865 1130 L948 1088 L1035 1172 L992 1255 L815 1322 L778 1290 Z" fill="#c8c8c8"/><path d="M800 1312 L882 1228" stroke="#535353" stroke-width="11"/><circle cx="886" cy="1222" r="15" fill="#535353"/><rect x="-55" y="-36" width="110" height="72" rx="12" transform="translate(1020 1085) rotate(45)" fill="#c8c8c8"/><path d="M728 1045 C772 1052 778 1100 752 1150 C722 1205 700 1262 742 1302 C757 1315 772 1310 778 1298" fill="none" stroke="#c8c8c8" stroke-width="15" stroke-linecap="round"/></g><g transform="translate(10 300) scale(0.09331)"><path d="M196 154 H458 V218 H428 V204 H352 V384 H381 V408 H272 V384 H303 V204 H226 V218 H196 Z" fill="#c8c8c8" stroke="#c8c8c8" stroke-width="9" stroke-linejoin="round"/><path d="M501 462 H568 V399 Z" fill="#c8c8c8"/><path d="M764 406 L1028 150" stroke="#c8c8c8" stroke-width="23" stroke-linecap="round"/><path d="M1063 462 H1130 V399 Z" fill="#c8c8c8"/><rect x="180" y="600" width="296" height="256" rx="6" fill="#6d6d6d" stroke="#c8c8c8" stroke-width="17"/><path d="M501 910 H568 V847 Z" fill="#c8c8c8"/><path d="M1046 578 C1060 600 1040 650 1002 695 L905 795 L858 750 L958 645 C1000 600 1035 572 1046 578 Z" fill="#c8c8c8"/><path d="M848 765 C820 755 785 785 783 828 C781 850 762 862 740 866 C790 895 875 885 893 808 Z" fill="#c8c8c8"/><path d="M1063 910 H1130 V847 Z" fill="#c8c8c8"/><circle cx="255" cy="1165" r="108" fill="#6f6f6f" stroke="#c8c8c8" stroke-width="17"/><path d="M490 1070 C520 1060 542 1085 528 1112 L366 1292 L330 1330 L262 1338 L268 1270 L300 1236 Z" fill="#c8c8c8" stroke="#535353" stroke-width="12" stroke-linejoin="round"/><path d="M501 1358 H568 V1295 Z" fill="#c8c8c8"/><path d="M922 1012 L1060 1148 Q1068 1158 1058 1168 L940 1282 L790 1135 L905 1015 Q914 1006 922 1012 Z" fill="#c8c8c8"/><path d="M782 1165 L752 1200 Q742 1212 752 1224 L845 1318 Q856 1328 868 1318 L905 1280" fill="#444" stroke="#c8c8c8" stroke-width="17" stroke-linejoin="round"/><path d="M1063 1358 H1130 V1295 Z" fill="#c8c8c8"/></g><g transform="translate(10 425) scale(0.09331)"><path d="M262 205 C340 120 475 175 472 322" fill="none" stroke="#c8c8c8" stroke-width="26"/><path d="M183 160 L192 265 L292 238 Z" fill="#c8c8c8"/><path d="M196 350 C215 410 270 435 325 432 C385 430 430 400 448 362" fill="none" stroke="#c8c8c8" stroke-width="17" stroke-dasharray="15 27.500" stroke-linecap="butt"/><path d="M501 468 H568 V405 Z" fill="#c8c8c8"/><rect x="812" y="147" width="246" height="208" fill="none" stroke="#c8c8c8" stroke-width="17"/><rect x="732" y="282" width="172" height="150" fill="none" stroke="#c8c8c8" stroke-width="17"/><path d="M938 267 L1026 184 M966 180 H1032 V246" fill="none" stroke="#c8c8c8" stroke-width="19"/><path d="M1063 468 H1130 V405 Z" fill="#c8c8c8"/><path d="M203.0 668.2L203.8 665.8L204.8 662.5L205.9 658.6L207.1 654.4L208.5 650.0L210.1 645.8L211.7 642.0L213.4 638.9L214.9 637.2L215.9 637.1L216.8 637.1L218.2 636.6L219.8 635.9L221.5 635.4L223.1 635.0L224.2 635.0L224.7 635.2L224.0 635.5L222.3 635.2L220.4 634.4L219.7 634.5L220.2 636.1L220.9 638.8L221.8 642.4L222.6 646.5L223.3 651.1L223.8 656.0L224.1 661.1L224.2 666.2L224.0 670.7L223.4 674.9L222.3 679.8L220.8 685.6L218.9 692.2L216.8 699.4L214.7 707.2L212.8 715.4L211.1 724.2L210.2 733.5L210.1 742.8L210.7 751.1L211.5 759.0L212.7 767.2L214.4 775.5L216.5 783.9L219.3 792.4L222.9 800.8L227.4 809.2L233.2 817.4L240.3 824.8L248.0 831.1L256.1 836.2L264.7 840.5L273.6 844.1L282.9 846.9L292.6 848.9L302.6 850.1L312.9 850.2L323.4 849.2L334.3 846.7L345.0 842.4L354.5 836.9L363.0 830.7L370.6 824.0L377.7 817.2L384.2 810.2L390.3 803.4L396.0 796.8L401.2 790.7L406.2 784.7L411.6 778.1L416.8 771.1L421.3 764.1L425.3 757.4L429.0 751.2L432.2 745.4L435.2 740.3L437.8 736.1L440.0 732.8L442.1 730.3L444.5 727.7L447.3 725.2L449.9 723.0L452.2 721.3L454.2 719.9L455.7 719.0L456.7 718.4L457.0 718.1L456.7 717.7L455.8 717.1L455.2 716.4L455.8 716.3L457.4 717.2L459.6 718.8L462.2 721.1L464.8 724.0L467.4 727.1L470.0 730.4L472.3 733.7L474.4 736.7L476.1 739.5L477.7 742.6L479.3 746.2L480.7 750.1L482.0 754.2L483.2 758.5L484.2 762.9L485.2 767.2L486.1 771.3L487.0 775.1L487.8 778.6L488.4 782.1L488.9 785.8L489.2 789.5L489.5 793.2L489.6 796.8L489.8 800.1L489.8 803.0L489.9 805.6L490.0 807.6L494.0 808.4L494.8 806.6L495.9 804.4L497.3 801.8L498.8 798.7L500.4 795.4L502.0 791.7L503.6 787.8L505.0 783.7L506.2 779.3L507.0 774.9L507.6 770.6L508.2 766.0L508.7 761.2L509.0 756.1L509.1 750.9L509.1 745.5L508.8 740.0L508.1 734.4L507.1 728.8L505.6 723.3L503.9 718.1L501.8 713.0L499.4 707.7L496.7 702.4L493.6 697.2L490.1 692.1L486.0 687.2L481.2 682.5L475.3 678.2L468.2 674.9L460.6 673.1L453.4 672.8L446.6 673.5L440.3 675.0L434.3 677.2L428.7 679.8L423.3 682.8L418.2 686.1L413.2 689.6L407.9 693.7L402.4 698.8L397.2 704.5L392.5 710.2L388.1 715.9L383.9 721.6L379.8 727.0L375.8 732.2L371.9 736.9L368.0 741.2L363.8 745.3L358.5 750.2L352.7 755.7L346.8 761.2L340.9 766.4L335.2 771.3L329.7 775.6L324.7 779.1L320.5 781.6L317.4 782.9L315.7 783.3L313.9 783.5L311.1 783.6L307.6 783.3L303.7 782.8L299.6 781.9L295.5 780.6L291.6 779.2L288.2 777.6L285.4 776.2L283.7 775.2L282.5 774.4L281.0 772.9L279.0 770.4L276.8 767.1L274.6 763.0L272.5 758.3L270.5 753.1L268.7 747.7L267.1 742.1L265.9 737.2L265.0 733.1L264.7 728.4L264.7 722.7L265.2 716.2L265.9 709.1L266.8 701.6L267.6 693.7L268.3 685.7L268.5 677.4L268.0 669.3L266.9 661.9L265.5 655.1L263.9 648.4L261.9 641.9L259.8 635.7L257.4 629.9L254.8 624.4L251.8 619.2L248.3 614.4L243.6 609.6L237.2 605.6L230.1 603.6L223.7 603.4L217.9 604.4L212.8 606.2L208.2 608.5L204.0 611.3L200.2 614.6L197.0 618.3L194.1 622.9L192.2 628.3L191.6 633.6L191.7 638.8L192.3 644.0L193.1 649.0L194.0 653.8L195.0 658.3L195.9 662.2L196.6 665.4L197.0 667.8Z" fill="#c8c8c8"/><path d="M185 848 L375 652" stroke="#535353" stroke-width="30"/><path d="M185 848 L375 652" stroke="#c8c8c8" stroke-width="12"/><circle cx="182" cy="850" r="22" fill="#535353" stroke="#c8c8c8" stroke-width="12"/><circle cx="376" cy="650" r="22" fill="#535353" stroke="#c8c8c8" stroke-width="12"/><circle cx="278" cy="752" r="36" fill="none" stroke="#c8c8c8" stroke-width="10"/><path d="M501 920 H568 V857 Z" fill="#c8c8c8"/><rect x="838" y="622" width="230" height="232" fill="none" stroke="#c8c8c8" stroke-width="14"/><rect x="819" y="603" width="38" height="38" fill="#c8c8c8" stroke="#535353" stroke-width="7"/><rect x="934" y="603" width="38" height="38" fill="#c8c8c8" stroke="#535353" stroke-width="7"/><rect x="1049" y="603" width="38" height="38" fill="#c8c8c8" stroke="#535353" stroke-width="7"/><rect x="1049" y="719" width="38" height="38" fill="#c8c8c8" stroke="#535353" stroke-width="7"/><rect x="1049" y="835" width="38" height="38" fill="#c8c8c8" stroke="#535353" stroke-width="7"/><rect x="934" y="835" width="38" height="38" fill="#c8c8c8" stroke="#535353" stroke-width="7"/><rect x="819" y="835" width="38" height="38" fill="#c8c8c8" stroke="#535353" stroke-width="7"/><path d="M722 575 L722 840 L800 772 L910 745 Z" fill="#c8c8c8" stroke="#535353" stroke-width="8"/><path d="M1063 920 H1130 V857 Z" fill="#c8c8c8"/><circle cx="345" cy="1150" r="112" fill="none" stroke="#c8c8c8" stroke-width="15"/><circle cx="245" cy="1160" r="85" fill="#535353" stroke="#c8c8c8" stroke-width="15"/><path d="M290 1090 A85 85 0 0 1 290 1232" fill="none" stroke="#8c8c8c" stroke-width="12"/><path d="M195 1160 H370" stroke="#c8c8c8" stroke-width="14" stroke-dasharray="16 14"/><path d="M385 1135 L385 1345 L450 1288 L535 1275 Z" fill="#c8c8c8" stroke="#535353" stroke-width="8"/><path d="M501 1370 H568 V1307 Z" fill="#c8c8c8"/><path d="M735 1042 V1338 L915 1215 V1100 Z M815 1066 V1284 M870 1085 V1246 M735 1190 L915 1160" fill="none" stroke="#c8c8c8" stroke-width="14" stroke-linejoin="round"/><path d="M925 1188 H985 M880 1232 H1010 M825 1280 H1040 M762 1330 H1065" stroke="#8c8c8c" stroke-width="11"/><path d="M1063 1370 H1130 V1307 Z" fill="#c8c8c8"/></g><g transform="translate(10 550) scale(0.09331)"><rect x="180" y="174" width="296" height="254" rx="6" fill="none" stroke="#c8c8c8" stroke-width="17"/><path d="M185 300 C250 240 330 250 380 320 C410 350 440 330 470 320 M190 410 C230 330 310 320 400 400 M290 180 C300 260 300 340 270 425 M385 180 C420 260 420 340 385 425" fill="none" stroke="#c8c8c8" stroke-width="14"/><defs><linearGradient id="tgr" x1="0" y1="0" x2="1" y2="0"><stop offset="0.050" stop-color="#333"/><stop offset="0.950" stop-color="#d6d6d6"/></linearGradient></defs><rect x="747" y="177" width="296" height="252" rx="6" fill="url(#tgr)" stroke="#c8c8c8" stroke-width="15"/><path d="M388 598 L478 692 M178 812 L268 905" stroke="#c8c8c8" stroke-width="13"/><path d="M262 818 L400 680" stroke="#c8c8c8" stroke-width="35"/><path d="M440 640 L425 735 L345 655 Z M222 858 L238 765 L318 845 Z" fill="#c8c8c8"/><path d="M262 715 L292 685" stroke="#c8c8c8" stroke-width="30" stroke-linecap="round"/><path d="M905 712 L762 855 Q740 880 760 898 Q780 912 802 892 L945 750" fill="none" stroke="#c8c8c8" stroke-width="17" stroke-linejoin="round"/><path d="M892 678 L988 770" stroke="#c8c8c8" stroke-width="46" stroke-linecap="round"/><path d="M962 694 L1006 642" stroke="#c8c8c8" stroke-width="84" stroke-linecap="round"/><path d="M1063 935 H1130 V872 Z" fill="#c8c8c8"/><rect x="155" y="1070" width="152" height="150" fill="#c8c8c8"/><rect x="255" y="1120" width="150" height="155" rx="55" fill="#8f8f8f" stroke="#c8c8c8" stroke-width="13"/><circle cx="422" cy="1256" r="70" fill="#535353" stroke="#c8c8c8" stroke-width="15"/><rect x="882" y="1135" width="176" height="208" rx="8" fill="none" stroke="#c8c8c8" stroke-width="17"/><circle cx="968" cy="1237" r="42" fill="none" stroke="#c8c8c8" stroke-width="28"/><path d="M915 1135 V1098 H940 V1052 H1005 V1098 H1022 V1135 Z" fill="#c8c8c8"/><path d="M742 1064 L763 1085 L742 1106 L721 1085 Z" fill="#c8c8c8"/><path d="M800 1064 L821 1085 L800 1106 L779 1085 Z" fill="#c8c8c8"/><path d="M858 1064 L879 1085 L858 1106 L837 1085 Z" fill="#c8c8c8"/><path d="M742 1121 L763 1142 L742 1163 L721 1142 Z" fill="#c8c8c8"/><path d="M800 1121 L821 1142 L800 1163 L779 1142 Z" fill="#c8c8c8"/><path d="M742 1179 L763 1200 L742 1221 L721 1200 Z" fill="#c8c8c8"/><path d="M1063 1385 H1130 V1322 Z" fill="#c8c8c8"/></g><g transform="translate(10 675) scale(0.09331)"><path d="M165 158 V432 H495" fill="none" stroke="#c8c8c8" stroke-width="15"/><path d="M228 300 Q228 288 240 288 H278 Q290 288 290 300 V428 H228 Z M330 192 Q330 180 342 180 H373 Q385 180 385 192 V428 H330 Z M425 228 Q425 216 437 216 H468 Q480 216 480 228 V428 H425 Z" fill="#c8c8c8"/><path d="M501 490 H568 V427 Z" fill="#c8c8c8"/><path d="M810 140 V215 M705 245 H785" stroke="#c8c8c8" stroke-width="13"/><path d="M805 240 H965 L1025 300 V440 H805 Z" fill="#6d6d6d" stroke="#c8c8c8" stroke-width="15" stroke-linejoin="round"/><path d="M960 240 V305 H1025 Z" fill="#c8c8c8"/><path d="M152 915 L300 745 L355 690 L425 760 L375 825 Z" fill="none" stroke="#c8c8c8" stroke-width="15" stroke-linejoin="miter"/><rect x="-62" y="-42" width="124" height="84" rx="10" transform="translate(412 668) rotate(35)" fill="#c8c8c8"/><path d="M501 940 H568 V877 Z" fill="#c8c8c8"/><path d="M845 905 C800 860 780 810 752 775 C740 752 765 735 790 755 L838 800 L815 665 C810 635 848 628 856 658 L872 735 L868 625 C868 595 910 595 912 625 L918 735 L938 645 C945 615 982 625 978 655 L962 765 L1000 700 C1015 675 1048 692 1036 720 C1015 775 1000 830 975 880 C950 925 880 930 845 905 Z" fill="#c8c8c8"/><path d="M1063 940 H1130 V877 Z" fill="#c8c8c8"/><path d="M180 1050 Q240 1210 180 1372" fill="none" stroke="#c8c8c8" stroke-width="13"/><rect x="248" y="1092" width="150" height="86" rx="8" transform="rotate(-6 320 1135)" fill="#c8c8c8"/><rect x="246" y="1245" width="232" height="96" rx="8" transform="rotate(6 360 1290)" fill="#c8c8c8"/><circle cx="856" cy="1172" r="106" fill="none" stroke="#c8c8c8" stroke-width="20"/><path d="M938 1252 L1032 1345" stroke="#c8c8c8" stroke-width="30" stroke-linecap="round"/></g></svg>
<!-- p_extra -->
<div class="a" style="left:2060px;top:216px;width:65px;height:1.5px;background:#3d3d3d;"></div>
<div class="a" style="left:2060px;top:287px;width:65px;height:1.5px;background:#3d3d3d;"></div>
<div class="a" style="left:2060px;top:359.5px;width:65px;height:1.5px;background:#3d3d3d;"></div>
<svg width="2560" height="1393" style="left:0;top:0" viewBox="0 0 2560 1393"><defs><radialGradient id="fg" cx="0.5" cy="0.52" r="0.62"><stop offset="0" stop-color="#a69e9a"/><stop offset="0.550" stop-color="#7f7873"/><stop offset="1" stop-color="#58514d"/></radialGradient></defs><g transform="translate(151.3 172.7) scale(1)"><path d="M18.5 1.8 H6.6 a4.8 4.8 0 0 0 -4.8 4.8 V22.800 a4.8 4.8 0 0 0 4.8 4.8 H22.800 a4.8 4.8 0 0 0 4.8 -4.8 V13.5" fill="none" stroke="#c8c8c8" stroke-width="3.600"/><path d="M30.68 -4.95L30.12 0.94L35.32 3.77L29.54 5.05L28.46 10.87L25.45 5.77L19.58 6.54L23.51 2.11L20.96 -3.24L26.39 -0.87Z" fill="#c8c8c8" stroke="#c8c8c8" stroke-width="0.8" stroke-linejoin="round"/><path d="M17.85 9.97L17.48 13.90L20.95 15.78L17.09 16.63L16.37 20.51L14.37 17.11L10.46 17.63L13.07 14.67L11.37 11.11L14.99 12.68Z" fill="#c8c8c8" stroke="#c8c8c8" stroke-width="0.8" stroke-linejoin="round"/></g><g transform="translate(130 145) scale(0.14000)"><circle cx="235" cy="655" r="90" fill="#c8c8c8"/><path d="M245 548 A107 107 0 0 1 245 762" fill="none" stroke="#535353" stroke-width="36"/><path d="M245 548 A107 107 0 0 1 245 762" fill="none" stroke="#c8c8c8" stroke-width="12"/><rect x="226" y="531" width="38" height="38" rx="5" fill="#c8c8c8"/><rect x="331" y="636" width="38" height="38" rx="5" fill="#c8c8c8"/><rect x="226" y="743" width="38" height="38" rx="5" fill="#c8c8c8"/><rect x="165" y="1075" width="115" height="110" fill="#c8c8c8"/><rect x="228" y="1135" width="127" height="127" fill="#c8c8c8"/><rect x="231" y="1138" width="46" height="44" fill="none" stroke="#535353" stroke-width="6"/></g><rect x="13.500" y="812.700" width="106" height="1" fill="#606060"/><rect x="46.200" y="853" width="61.500" height="61.500" fill="#3a3a3a"/><rect x="47.200" y="854" width="59.500" height="59.500" fill="#fff"/><rect x="62.500" y="870.300" width="28.400" height="27.100" fill="#555" stroke="#3c3c3c" stroke-width="1.500"/><path d="M47.200 913.500 L106.700 854" stroke="#f20d0d" stroke-width="3.400"/><rect x="14.500" y="821.600" width="62" height="61.800" fill="#2e2e2e"/><rect x="15.500" y="822.600" width="60" height="59.800" fill="#fff"/><rect x="17.200" y="824.300" width="56.600" height="56.400" fill="url(#fg)"/><g transform="translate(5 805) scale(0.10048)"><path d="M905 245 C985 235 1010 280 1000 335" fill="none" stroke="#c8c8c8" stroke-width="44"/><path d="M865 232 L945 178 V300 Z M948 320 H1068 L1010 382 Z" fill="#c8c8c8"/><rect x="160" y="948" width="118" height="118" fill="#000" stroke="#c8c8c8" stroke-width="13"/><rect x="112" y="898" width="112" height="112" fill="#fff" stroke="#c8c8c8" stroke-width="13"/></g><rect x="14.500" y="926.500" width="101.800" height="35" rx="4" fill="none" stroke="#606060" stroke-width="1"/><rect x="49.200" y="928" width="33" height="32.500" fill="#3b3b3b"/><rect x="48.200" y="927" width="1" height="34" fill="#606060"/><rect x="82.700" y="927" width="1" height="34" fill="#606060"/><rect x="18.900" y="933.100" width="23.100" height="22.900" fill="#000"/><rect x="20.900" y="935.100" width="19.100" height="18.900" fill="#a49a94"/><rect x="53.700" y="933.100" width="23.100" height="22.900" fill="#000"/><rect x="55.700" y="935.100" width="19.100" height="18.900" fill="url(#fg)"/><rect x="88.900" y="933.100" width="22.900" height="22.900" fill="#000"/><rect x="90.900" y="935.100" width="18.900" height="18.900" fill="#fff"/><path d="M91.500 953.400 L109.200 935.700" stroke="#f20d0d" stroke-width="3.600"/><rect x="14.500" y="970" width="101.800" height="32.200" rx="4" fill="none" stroke="#606060" stroke-width="1"/><rect x="15.500" y="971" width="31.500" height="30.200" rx="3" fill="#333"/><rect x="48.200" y="970.500" width="1" height="31.200" fill="#606060"/><rect x="82.700" y="970.500" width="1" height="31.200" fill="#606060"/><g transform="translate(5 920) scale(0.10048)"><circle cx="245" cy="650" r="62" fill="#777" stroke="#d4d4d4" stroke-width="13"/><rect x="245" y="655" width="105" height="103" rx="6" fill="#d4d4d4"/><rect x="595" y="655" width="105" height="103" rx="6" fill="#d4d4d4"/><circle cx="590" cy="650" r="62" fill="#777" stroke="#d4d4d4" stroke-width="13"/><circle cx="942" cy="650" r="65" fill="none" stroke="#6e6e6e" stroke-width="11"/><path d="M945 655 H1005 A65 65 0 0 1 945 712 Z" fill="#6e6e6e"/><rect x="426" y="1051" width="233" height="193" fill="#6d6d6d" stroke="#d4d4d4" stroke-width="13"/><rect x="420" y="1045" width="245" height="50" fill="#d4d4d4"/><rect x="568" y="981" width="234" height="193" fill="#6d6d6d" stroke="#d4d4d4" stroke-width="13"/><rect x="562" y="975" width="246" height="55" fill="#d4d4d4"/></g><circle cx="57.5" cy="1087.400" r="3.300" fill="#c8c8c8"/><circle cx="67" cy="1087.400" r="3.300" fill="#c8c8c8"/><circle cx="76.3" cy="1087.400" r="3.300" fill="#c8c8c8"/><rect x="2073.70" y="151" width="1.5" height="7" fill="#363636"/><rect x="2077.34" y="151" width="1.5" height="7" fill="#363636"/><rect x="2080.98" y="151" width="1.5" height="7" fill="#363636"/><rect x="2084.62" y="151" width="1.5" height="7" fill="#363636"/><rect x="2088.26" y="151" width="1.5" height="7" fill="#363636"/><rect x="2091.90" y="151" width="1.5" height="7" fill="#363636"/><rect x="2095.54" y="151" width="1.5" height="7" fill="#363636"/><rect x="2099.18" y="151" width="1.5" height="7" fill="#363636"/><rect x="2102.82" y="151" width="1.5" height="7" fill="#363636"/><rect x="2106.46" y="151" width="1.5" height="7" fill="#363636"/><rect x="2073.70" y="222.5" width="1.5" height="7" fill="#363636"/><rect x="2077.34" y="222.5" width="1.5" height="7" fill="#363636"/><rect x="2080.98" y="222.5" width="1.5" height="7" fill="#363636"/><rect x="2084.62" y="222.5" width="1.5" height="7" fill="#363636"/><rect x="2088.26" y="222.5" width="1.5" height="7" fill="#363636"/><rect x="2091.90" y="222.5" width="1.5" height="7" fill="#363636"/><rect x="2095.54" y="222.5" width="1.5" height="7" fill="#363636"/><rect x="2099.18" y="222.5" width="1.5" height="7" fill="#363636"/><rect x="2102.82" y="222.5" width="1.5" height="7" fill="#363636"/><rect x="2106.46" y="222.5" width="1.5" height="7" fill="#363636"/><rect x="2073.70" y="294" width="1.5" height="7" fill="#363636"/><rect x="2077.34" y="294" width="1.5" height="7" fill="#363636"/><rect x="2080.98" y="294" width="1.5" height="7" fill="#363636"/><rect x="2084.62" y="294" width="1.5" height="7" fill="#363636"/><rect x="2088.26" y="294" width="1.5" height="7" fill="#363636"/><rect x="2091.90" y="294" width="1.5" height="7" fill="#363636"/><rect x="2095.54" y="294" width="1.5" height="7" fill="#363636"/><rect x="2099.18" y="294" width="1.5" height="7" fill="#363636"/><rect x="2102.82" y="294" width="1.5" height="7" fill="#363636"/><rect x="2106.46" y="294" width="1.5" height="7" fill="#363636"/><g transform="translate(2056 145) scale(0.15778)" fill="#c8c8c8"><rect x="192" y="298" width="104" height="72" rx="14"/><path d="M222 305 L196 240 C150 215 160 180 182 190 C215 205 222 240 222 240 L240 300 Z"/><path d="M175 185 C190 200 215 230 205 262 C175 250 150 215 175 185 Z"/><path d="M238 300 L222 215 L208 212 L212 160 L245 155 L250 205 L238 212 L262 300 Z"/><path d="M262 302 L288 235 C260 225 275 200 300 202 C325 205 340 225 332 248 L300 240 L282 305 Z"/></g><defs><linearGradient id="gr2" x1="0" y1="0" x2="1" y2="0"><stop offset="0.050" stop-color="#2e2e2e"/><stop offset="1" stop-color="#d8d8d8"/></linearGradient></defs><rect x="2080.400" y="248.900" width="28" height="19" fill="url(#gr2)" stroke="#d6d6d6" stroke-width="2"/><circle cx="2094.300" cy="329.900" r="10.300" fill="#d0d0d0"/><circle cx="2094.300" cy="329.900" r="14.200" fill="none" stroke="#d0d0d0" stroke-width="2.200" stroke-dasharray="4.200 3.230"/></svg>
<!-- p_canvas -->
<span class="t dc" style="left:219px;top:143px;font-size:16.4px;line-height:16.4px;color:#f0f0f0;font-weight:700;transform:scaleX(1.1047);">esquie.ai* @ 150 % (CMJN/Aperçu)</span>
<svg width="2560" height="1393" style="left:0;top:0" viewBox="0 0 2560 1393"><path d="M570.500 144 L580.500 154.300 M580.500 144 L570.500 154.300" stroke="#ececec" stroke-width="2" fill="none"/><rect x="329" y="191" width="1341" height="1120" fill="#000"/><rect x="331" y="191" width="1337" height="1120" fill="#fff"/><rect x="298" y="191" width="2" height="1120" fill="#b83a42"/><rect x="1700" y="191" width="2" height="1120" fill="#b83a42"/><path d="M221.5 187V191M227.5 187V191M234.5 184V191M240.5 187V191M246.5 187V191M253.5 187V191M259.5 187V191M266.5 174V191M272.5 187V191M278.5 187V191M285.5 187V191M291.5 187V191M298.5 184V191M304.5 187V191M310.5 187V191M317.5 187V191M323.5 187V191M329.5 174V191M336.5 187V191M342.5 187V191M349.5 187V191M355.5 187V191M361.5 184V191M368.5 187V191M374.5 187V191M380.5 187V191M387.5 187V191M393.5 174V191M400.5 187V191M406.5 187V191M412.5 187V191M419.5 187V191M425.5 184V191M431.5 187V191M438.5 187V191M444.5 187V191M451.5 187V191M457.5 174V191M463.5 187V191M470.5 187V191M476.5 187V191M482.5 187V191M489.5 184V191M495.5 187V191M502.5 187V191M508.5 187V191M514.5 187V191M521.5 174V191M527.5 187V191M533.5 187V191M540.5 187V191M546.5 187V191M553.5 184V191M559.5 187V191M565.5 187V191M572.5 187V191M578.5 187V191M585.5 174V191M591.5 187V191M597.5 187V191M604.5 187V191M610.5 187V191M616.5 184V191M623.5 187V191M629.5 187V191M636.5 187V191M642.5 187V191M648.5 174V191M655.5 187V191M661.5 187V191M667.5 187V191M674.5 187V191M680.5 184V191M687.5 187V191M693.5 187V191M699.5 187V191M706.5 187V191M712.5 174V191M718.5 187V191M725.5 187V191M731.5 187V191M738.5 187V191M744.5 184V191M750.5 187V191M757.5 187V191M763.5 187V191M769.5 187V191M776.5 174V191M782.5 187V191M789.5 187V191M795.5 187V191M801.5 187V191M808.5 184V191M814.5 187V191M820.5 187V191M827.5 187V191M833.5 187V191M840.5 174V191M846.5 187V191M852.5 187V191M859.5 187V191M865.5 187V191M872.5 184V191M878.5 187V191M884.5 187V191M891.5 187V191M897.5 187V191M903.5 174V191M910.5 187V191M916.5 187V191M923.5 187V191M929.5 187V191M935.5 184V191M942.5 187V191M948.5 187V191M954.5 187V191M961.5 187V191M967.5 174V191M974.5 187V191M980.5 187V191M986.5 187V191M993.5 187V191M999.5 184V191M1005.5 187V191M1012.5 187V191M1018.5 187V191M1025.5 187V191M1031.5 174V191M1037.5 187V191M1044.5 187V191M1050.5 187V191M1056.5 187V191M1063.5 184V191M1069.5 187V191M1076.5 187V191M1082.5 187V191M1088.5 187V191M1095.5 174V191M1101.5 187V191M1108.5 187V191M1114.5 187V191M1120.5 187V191M1127.5 184V191M1133.5 187V191M1139.5 187V191M1146.5 187V191M1152.5 187V191M1159.5 174V191M1165.5 187V191M1171.5 187V191M1178.5 187V191M1184.5 187V191M1190.5 184V191M1197.5 187V191M1203.5 187V191M1210.5 187V191M1216.5 187V191M1222.5 174V191M1229.5 187V191M1235.5 187V191M1241.5 187V191M1248.5 187V191M1254.5 184V191M1261.5 187V191M1267.5 187V191M1273.5 187V191M1280.5 187V191M1286.5 174V191M1292.5 187V191M1299.5 187V191M1305.5 187V191M1312.5 187V191M1318.5 184V191M1324.5 187V191M1331.5 187V191M1337.5 187V191M1343.5 187V191M1350.5 174V191M1356.5 187V191M1363.5 187V191M1369.5 187V191M1375.5 187V191M1382.5 184V191M1388.5 187V191M1395.5 187V191M1401.5 187V191M1407.5 187V191M1414.5 174V191M1420.5 187V191M1426.5 187V191M1433.5 187V191M1439.5 187V191M1446.5 184V191M1452.5 187V191M1458.5 187V191M1465.5 187V191M1471.5 187V191M1477.5 174V191M1484.5 187V191M1490.5 187V191M1497.5 187V191M1503.5 187V191M1509.5 184V191M1516.5 187V191M1522.5 187V191M1528.5 187V191M1535.5 187V191M1541.5 174V191M1548.5 187V191M1554.5 187V191M1560.5 187V191M1567.5 187V191M1573.5 184V191M1579.5 187V191M1586.5 187V191M1592.5 187V191M1599.5 187V191M1605.5 174V191M1611.5 187V191M1618.5 187V191M1624.5 187V191M1630.5 187V191M1637.5 184V191M1643.5 187V191M1650.5 187V191M1656.5 187V191M1662.5 187V191M1669.5 174V191M1675.5 187V191M1682.5 187V191M1688.5 187V191M1694.5 187V191M1701.5 184V191M1707.5 187V191M1713.5 187V191M1720.5 187V191M1726.5 187V191M1733.5 174V191M1739.5 187V191M1745.5 187V191M1752.5 187V191M1758.5 187V191M1764.5 184V191M1771.5 187V191M1777.5 187V191M1784.5 187V191M1790.5 187V191M1796.5 174V191M1803.5 187V191M1809.5 187V191M1815.5 187V191M1822.5 187V191M1828.5 184V191M1835.5 187V191M1841.5 187V191M1847.5 187V191M1854.5 187V191M1860.5 174V191M1866.5 187V191M1873.5 187V191M1879.5 187V191M1886.5 187V191M1892.5 184V191M1898.5 187V191M1905.5 187V191M1911.5 187V191M1917.5 187V191M1924.5 174V191M1930.5 187V191M1937.5 187V191M1943.5 187V191M1949.5 187V191M1956.5 184V191M1962.5 187V191M1969.5 187V191M1975.5 187V191M1981.5 187V191M1988.5 174V191M1994.5 187V191M2000.5 187V191M2007.5 187V191M2013.5 187V191M2020.5 184V191M214 192.5H218M203 199.5H218M214 205.5H218M214 211.5H218M214 218.5H218M214 224.5H218M211 230.5H218M214 237.5H218M214 243.5H218M214 250.5H218M214 256.5H218M203 262.5H218M214 269.5H218M214 275.5H218M214 281.5H218M214 288.5H218M211 294.5H218M214 301.5H218M214 307.5H218M214 313.5H218M214 320.5H218M203 326.5H218M214 332.5H218M214 339.5H218M214 345.5H218M214 352.5H218M211 358.5H218M214 364.5H218M214 371.5H218M214 377.5H218M214 384.5H218M203 390.5H218M214 396.5H218M214 403.5H218M214 409.5H218M214 415.5H218M211 422.5H218M214 428.5H218M214 435.5H218M214 441.5H218M214 447.5H218M203 454.5H218M214 460.5H218M214 466.5H218M214 473.5H218M214 479.5H218M211 486.5H218M214 492.5H218M214 498.5H218M214 505.5H218M214 511.5H218M203 517.5H218M214 524.5H218M214 530.5H218M214 537.5H218M214 543.5H218M211 549.5H218M214 556.5H218M214 562.5H218M214 568.5H218M214 575.5H218M203 581.5H218M214 588.5H218M214 594.5H218M214 600.5H218M214 607.5H218M211 613.5H218M214 619.5H218M214 626.5H218M214 632.5H218M214 639.5H218M203 645.5H218M214 651.5H218M214 658.5H218M214 664.5H218M214 671.5H218M211 677.5H218M214 683.5H218M214 690.5H218M214 696.5H218M214 702.5H218M203 709.5H218M214 715.5H218M214 722.5H218M214 728.5H218M214 734.5H218M211 741.5H218M214 747.5H218M214 753.5H218M214 760.5H218M214 766.5H218M203 773.5H218M214 779.5H218M214 785.5H218M214 792.5H218M214 798.5H218M211 804.5H218M214 811.5H218M214 817.5H218M214 824.5H218M214 830.5H218M203 836.5H218M214 843.5H218M214 849.5H218M214 855.5H218M214 862.5H218M211 868.5H218M214 875.5H218M214 881.5H218M214 887.5H218M214 894.5H218M203 900.5H218M214 906.5H218M214 913.5H218M214 919.5H218M214 926.5H218M211 932.5H218M214 938.5H218M214 945.5H218M214 951.5H218M214 958.5H218M203 964.5H218M214 970.5H218M214 977.5H218M214 983.5H218M214 989.5H218M211 996.5H218M214 1002.5H218M214 1009.5H218M214 1015.5H218M214 1021.5H218M203 1028.5H218M214 1034.5H218M214 1040.5H218M214 1047.5H218M214 1053.5H218M211 1060.5H218M214 1066.5H218M214 1072.5H218M214 1079.5H218M214 1085.5H218M203 1091.5H218M214 1098.5H218M214 1104.5H218M214 1111.5H218M214 1117.5H218M211 1123.5H218M214 1130.5H218M214 1136.5H218M214 1142.5H218M214 1149.5H218M203 1155.5H218M214 1162.5H218M214 1168.5H218M214 1174.5H218M214 1181.5H218M211 1187.5H218M214 1194.5H218M214 1200.5H218M214 1206.5H218M214 1213.5H218M203 1219.5H218M214 1225.5H218M214 1232.5H218M214 1238.5H218M214 1245.5H218M211 1251.5H218M214 1257.5H218M214 1264.5H218M214 1270.5H218M214 1276.5H218M203 1283.5H218M214 1289.5H218M214 1296.5H218M214 1302.5H218M214 1308.5H218M218.5 174V191" stroke="#929292" stroke-width="1" fill="none" shape-rendering="crispEdges"/><path d="M203 179.500H218M206.500 174V191" stroke="#777" stroke-width="1" fill="none" shape-rendering="crispEdges"/><defs><clipPath id="vr"><rect x="203" y="191" width="15" height="1120"/></clipPath></defs><g font-family="Liberation Sans, sans-serif" font-size="9.300" fill="#d2d2d2"><text x="268.7" y="186" textLength="9.8" lengthAdjust="spacingAndGlyphs">10</text><text x="332.5" y="186" textLength="4.6" lengthAdjust="spacingAndGlyphs">0</text><text x="396.3" y="186" textLength="9.8" lengthAdjust="spacingAndGlyphs">10</text><text x="460.1" y="186" textLength="9.8" lengthAdjust="spacingAndGlyphs">20</text><text x="523.8" y="186" textLength="9.8" lengthAdjust="spacingAndGlyphs">30</text><text x="587.6" y="186" textLength="9.8" lengthAdjust="spacingAndGlyphs">40</text><text x="651.4" y="186" textLength="9.8" lengthAdjust="spacingAndGlyphs">50</text><text x="715.2" y="186" textLength="9.8" lengthAdjust="spacingAndGlyphs">60</text><text x="779.0" y="186" textLength="9.8" lengthAdjust="spacingAndGlyphs">70</text><text x="842.7" y="186" textLength="9.8" lengthAdjust="spacingAndGlyphs">80</text><text x="906.5" y="186" textLength="9.8" lengthAdjust="spacingAndGlyphs">90</text><text x="970.3" y="186" textLength="15.0" lengthAdjust="spacingAndGlyphs">100</text><text x="1034.1" y="186" textLength="15.0" lengthAdjust="spacingAndGlyphs">110</text><text x="1097.8" y="186" textLength="15.0" lengthAdjust="spacingAndGlyphs">120</text><text x="1161.6" y="186" textLength="15.0" lengthAdjust="spacingAndGlyphs">130</text><text x="1225.4" y="186" textLength="15.0" lengthAdjust="spacingAndGlyphs">140</text><text x="1289.2" y="186" textLength="15.0" lengthAdjust="spacingAndGlyphs">150</text><text x="1353.0" y="186" textLength="15.0" lengthAdjust="spacingAndGlyphs">160</text><text x="1416.7" y="186" textLength="15.0" lengthAdjust="spacingAndGlyphs">170</text><text x="1480.5" y="186" textLength="15.0" lengthAdjust="spacingAndGlyphs">180</text><text x="1544.3" y="186" textLength="15.0" lengthAdjust="spacingAndGlyphs">190</text><text x="1608.1" y="186" textLength="15.0" lengthAdjust="spacingAndGlyphs">200</text><text x="1671.9" y="186" textLength="15.0" lengthAdjust="spacingAndGlyphs">210</text><text x="1735.6" y="186" textLength="15.0" lengthAdjust="spacingAndGlyphs">220</text><text x="1799.4" y="186" textLength="15.0" lengthAdjust="spacingAndGlyphs">230</text><text x="1863.2" y="186" textLength="15.0" lengthAdjust="spacingAndGlyphs">240</text><text x="1927.0" y="186" textLength="15.0" lengthAdjust="spacingAndGlyphs">250</text><text x="1990.8" y="186" textLength="15.0" lengthAdjust="spacingAndGlyphs">260</text><text x="203.800" y="196.6" clip-path="url(#vr)" textLength="4.600" lengthAdjust="spacingAndGlyphs">0</text><text x="203.800" y="260.4" clip-path="url(#vr)" textLength="4.600" lengthAdjust="spacingAndGlyphs">0</text><text x="203.800" y="248.3" clip-path="url(#vr)" textLength="4.600" lengthAdjust="spacingAndGlyphs">9</text><text x="203.800" y="324.2" clip-path="url(#vr)" textLength="4.600" lengthAdjust="spacingAndGlyphs">0</text><text x="203.800" y="312.1" clip-path="url(#vr)" textLength="4.600" lengthAdjust="spacingAndGlyphs">0</text><text x="203.800" y="300.0" clip-path="url(#vr)" textLength="4.600" lengthAdjust="spacingAndGlyphs">1</text><text x="203.800" y="387.9" clip-path="url(#vr)" textLength="4.600" lengthAdjust="spacingAndGlyphs">0</text><text x="203.800" y="375.8" clip-path="url(#vr)" textLength="4.600" lengthAdjust="spacingAndGlyphs">1</text><text x="203.800" y="363.7" clip-path="url(#vr)" textLength="4.600" lengthAdjust="spacingAndGlyphs">1</text><text x="203.800" y="451.7" clip-path="url(#vr)" textLength="4.600" lengthAdjust="spacingAndGlyphs">0</text><text x="203.800" y="439.6" clip-path="url(#vr)" textLength="4.600" lengthAdjust="spacingAndGlyphs">2</text><text x="203.800" y="427.5" clip-path="url(#vr)" textLength="4.600" lengthAdjust="spacingAndGlyphs">1</text><text x="203.800" y="515.5" clip-path="url(#vr)" textLength="4.600" lengthAdjust="spacingAndGlyphs">0</text><text x="203.800" y="503.4" clip-path="url(#vr)" textLength="4.600" lengthAdjust="spacingAndGlyphs">3</text><text x="203.800" y="491.3" clip-path="url(#vr)" textLength="4.600" lengthAdjust="spacingAndGlyphs">1</text><text x="203.800" y="579.3" clip-path="url(#vr)" textLength="4.600" lengthAdjust="spacingAndGlyphs">0</text><text x="203.800" y="567.2" clip-path="url(#vr)" textLength="4.600" lengthAdjust="spacingAndGlyphs">4</text><text x="203.800" y="555.1" clip-path="url(#vr)" textLength="4.600" lengthAdjust="spacingAndGlyphs">1</text><text x="203.800" y="643.1" clip-path="url(#vr)" textLength="4.600" lengthAdjust="spacingAndGlyphs">0</text><text x="203.800" y="631.0" clip-path="url(#vr)" textLength="4.600" lengthAdjust="spacingAndGlyphs">5</text><text x="203.800" y="618.9" clip-path="url(#vr)" textLength="4.600" lengthAdjust="spacingAndGlyphs">1</text><text x="203.800" y="706.8" clip-path="url(#vr)" textLength="4.600" lengthAdjust="spacingAndGlyphs">0</text><text x="203.800" y="694.7" clip-path="url(#vr)" textLength="4.600" lengthAdjust="spacingAndGlyphs">6</text><text x="203.800" y="682.6" clip-path="url(#vr)" textLength="4.600" lengthAdjust="spacingAndGlyphs">1</text><text x="203.800" y="770.6" clip-path="url(#vr)" textLength="4.600" lengthAdjust="spacingAndGlyphs">0</text><text x="203.800" y="758.5" clip-path="url(#vr)" textLength="4.600" lengthAdjust="spacingAndGlyphs">7</text><text x="203.800" y="746.4" clip-path="url(#vr)" textLength="4.600" lengthAdjust="spacingAndGlyphs">1</text><text x="203.800" y="834.4" clip-path="url(#vr)" textLength="4.600" lengthAdjust="spacingAndGlyphs">0</text><text x="203.800" y="822.3" clip-path="url(#vr)" textLength="4.600" lengthAdjust="spacingAndGlyphs">8</text><text x="203.800" y="810.2" clip-path="url(#vr)" textLength="4.600" lengthAdjust="spacingAndGlyphs">1</text><text x="203.800" y="898.2" clip-path="url(#vr)" textLength="4.600" lengthAdjust="spacingAndGlyphs">0</text><text x="203.800" y="886.1" clip-path="url(#vr)" textLength="4.600" lengthAdjust="spacingAndGlyphs">9</text><text x="203.800" y="874.0" clip-path="url(#vr)" textLength="4.600" lengthAdjust="spacingAndGlyphs">1</text><text x="203.800" y="961.9" clip-path="url(#vr)" textLength="4.600" lengthAdjust="spacingAndGlyphs">0</text><text x="203.800" y="949.8" clip-path="url(#vr)" textLength="4.600" lengthAdjust="spacingAndGlyphs">0</text><text x="203.800" y="937.7" clip-path="url(#vr)" textLength="4.600" lengthAdjust="spacingAndGlyphs">2</text><text x="203.800" y="1025.7" clip-path="url(#vr)" textLength="4.600" lengthAdjust="spacingAndGlyphs">0</text><text x="203.800" y="1013.6" clip-path="url(#vr)" textLength="4.600" lengthAdjust="spacingAndGlyphs">1</text><text x="203.800" y="1001.5" clip-path="url(#vr)" textLength="4.600" lengthAdjust="spacingAndGlyphs">2</text><text x="203.800" y="1089.5" clip-path="url(#vr)" textLength="4.600" lengthAdjust="spacingAndGlyphs">0</text><text x="203.800" y="1077.4" clip-path="url(#vr)" textLength="4.600" lengthAdjust="spacingAndGlyphs">2</text><text x="203.800" y="1065.3" clip-path="url(#vr)" textLength="4.600" lengthAdjust="spacingAndGlyphs">2</text><text x="203.800" y="1153.3" clip-path="url(#vr)" textLength="4.600" lengthAdjust="spacingAndGlyphs">0</text><text x="203.800" y="1141.2" clip-path="url(#vr)" textLength="4.600" lengthAdjust="spacingAndGlyphs">3</text><text x="203.800" y="1129.1" clip-path="url(#vr)" textLength="4.600" lengthAdjust="spacingAndGlyphs">2</text><text x="203.800" y="1217.1" clip-path="url(#vr)" textLength="4.600" lengthAdjust="spacingAndGlyphs">0</text><text x="203.800" y="1205.0" clip-path="url(#vr)" textLength="4.600" lengthAdjust="spacingAndGlyphs">4</text><text x="203.800" y="1192.9" clip-path="url(#vr)" textLength="4.600" lengthAdjust="spacingAndGlyphs">2</text><text x="203.800" y="1280.8" clip-path="url(#vr)" textLength="4.600" lengthAdjust="spacingAndGlyphs">0</text><text x="203.800" y="1268.7" clip-path="url(#vr)" textLength="4.600" lengthAdjust="spacingAndGlyphs">5</text><text x="203.800" y="1256.6" clip-path="url(#vr)" textLength="4.600" lengthAdjust="spacingAndGlyphs">2</text></g><rect x="700" y="196" width="698" height="62.700" rx="6.500" fill="#2b2b2b"/><rect x="701.400" y="197.400" width="695.200" height="59.900" rx="5.300" fill="#535353"/><rect x="710.300" y="204" width="7.200" height="47.200" rx="3.600" fill="#a6a6a6"/><rect x="735.900" y="203.800" width="253.500" height="47.400" rx="4.500" fill="none" stroke="#6a6a6a" stroke-width="1.800"/><rect x="998.900" y="203.800" width="280" height="47.400" rx="4.500" fill="none" stroke="#6a6a6a" stroke-width="1.800"/><g fill="#cfcfcf"><path d="M776.700 213.800 L782.800 219.900 L779.300 224.200 L772.900 217.900 Z"/><path d="M772 218.800 L778.400 225.100 L764.300 239.300 L754.400 242.100 L757.500 232.500 Z"/></g><path d="M757 240.300 L758.600 235.200 L762.200 238.800 Z" fill="#535353"/><g transform="translate(1017.6 217.2) scale(0.985)"><path d="M12.5 1.8 H5.6 a3.8 3.8 0 0 0 -3.8 3.8 V20 a3.8 3.8 0 0 0 3.8 3.8 H20 a3.8 3.8 0 0 0 3.8 -3.8 V12.5" fill="none" stroke="#cfcfcf" stroke-width="3.600"/><path d="M24.37 -5.22Q23.35 2.37 30.22 5.77Q22.63 4.75 19.23 11.62Q20.25 4.03 13.38 0.63Q20.97 1.65 24.37 -5.22Z" fill="#cfcfcf"/><path d="M13.66 9.22Q13.08 13.53 16.98 15.46Q12.67 14.88 10.74 18.78Q11.32 14.47 7.42 12.54Q11.73 13.12 13.66 9.22Z" fill="#cfcfcf"/></g><g><path d="M1296.700 238.700 V218.600 H1319.100 V226" fill="none" stroke="#cfcfcf" stroke-width="2"/><path d="M1296.700 238.700 V232.500 L1302.300 226 L1306.400 231 L1308 238.700 Z" fill="#cfcfcf"/><circle cx="1313" cy="223.700" r="1.900" fill="#cfcfcf"/><circle cx="1314" cy="234.300" r="9.100" fill="#535353"/><circle cx="1314" cy="234.300" r="7.900" fill="#cfcfcf"/><path d="M1309.700 234.300 h8.600 M1314 230 v8.600" stroke="#535353" stroke-width="1.900"/></g><circle cx="1349.3" cy="228.300" r="3.650" fill="#cfcfcf"/><circle cx="1360" cy="228.300" r="3.650" fill="#cfcfcf"/><circle cx="1370.7" cy="228.300" r="3.650" fill="#cfcfcf"/><path d="M2034 193 L2040.500 186.500 L2047 193" fill="none" stroke="#a0a0a0" stroke-width="1.800"/><path d="M2034 1337 L2040.500 1343.500 L2047 1337" fill="none" stroke="#a0a0a0" stroke-width="1.800"/><rect x="2027" y="745" width="27" height="45" rx="13.500" fill="#606060"/></svg>
<span class="t" style="left:796.9px;top:218px;font-size:23.4px;line-height:23.4px;color:#f4f4f4;transform:scaleX(0.8815);">Dessiner (Crayon)</span>
<span class="t" style="left:1052.8px;top:218px;font-size:23.4px;line-height:23.4px;color:#f4f4f4;transform:scaleX(0.8874);">Générer des vecteurs</span>
<!-- p_art -->
<svg width="2560" height="1393" style="left:0;top:0" viewBox="0 0 2560 1393"><defs><linearGradient id="fade" x1="0" y1="0" x2="0" y2="1"><stop offset="0" stop-color="#554d49"/><stop offset="0.700" stop-color="#554d49"/><stop offset="1" stop-color="#554d49" stop-opacity="0.220"/></linearGradient></defs><circle cx="984.600" cy="664.600" r="231.700" fill="#fbf8ee"/><path d="M819.900 501.800 A231.700 231.700 0 0 1 874.400 461 V529.500 Q847 528.500 819.900 541.500 Z" fill="#554d49"/><path d="M1141.200 494.500 A231.700 231.700 0 0 0 1084.500 456.600 V530 Q1114 529 1141.200 538.500 Z" fill="#554d49"/><path d="M752.5 668.2L752.6 666.8L752.6 664.9L752.6 662.7L752.6 660.2L752.6 657.5L752.6 654.7L752.7 651.9L752.7 649.1L752.9 646.4L753.0 644.0L753.2 641.7L753.4 639.4L753.7 637.1L753.9 634.8L754.2 632.6L754.5 630.4L754.9 628.2L755.4 626.0L755.8 623.8L756.4 621.7L757.0 619.6L757.7 617.5L758.5 615.5L759.3 613.5L760.1 611.5L761.0 609.5L762.0 607.5L763.0 605.5L764.0 603.5L765.1 601.5L766.2 599.4L767.4 597.5L768.6 595.5L769.8 593.5L771.1 591.5L772.5 589.5L773.9 587.5L775.3 585.5L776.8 583.4L778.4 581.3L780.1 579.2L781.8 576.9L783.6 574.7L785.5 572.4L787.4 570.1L789.3 567.8L791.3 565.6L793.3 563.5L795.3 561.4L797.3 559.5L799.4 557.7L801.5 555.9L803.7 554.2L805.8 552.5L808.1 550.9L810.3 549.3L812.6 547.9L814.9 546.5L817.2 545.1L819.6 543.9L822.0 542.7L824.4 541.6L826.9 540.6L829.5 539.6L832.1 538.7L834.7 537.9L837.3 537.1L840.0 536.4L842.6 535.7L845.2 535.1L847.7 534.6L850.3 534.1L852.9 533.7L855.5 533.3L858.0 533.0L860.6 532.7L863.1 532.6L865.7 532.4L868.2 532.3L870.6 532.3L873.1 532.4L875.5 532.5L877.9 532.6L880.3 532.8L882.6 533.1L885.0 533.4L887.3 533.8L889.6 534.2L891.9 534.7L894.2 535.3L896.4 535.9L898.7 536.6L900.9 537.3L903.1 538.1L905.3 538.9L907.5 539.8L909.6 540.8L911.8 541.8L913.9 542.8L916.0 544.0L918.1 545.2L920.2 546.4L922.3 547.7L924.4 549.1L926.4 550.6L928.5 552.1L930.5 553.6L932.4 555.2L934.4 556.8L936.2 558.4L938.0 560.0L939.8 561.8L941.6 563.5L943.3 565.4L945.0 567.2L946.7 569.1L948.3 571.0L949.9 572.9L951.4 574.8L952.9 576.6L954.4 578.5L955.8 580.3L957.2 582.1L958.6 583.9L959.9 585.7L961.1 587.5L962.4 589.4L963.6 591.2L964.8 593.1L965.9 595.0L967.1 596.9L968.2 599.0L969.4 601.1L970.5 603.2L971.6 605.4L972.6 607.5L973.6 609.5L974.5 611.5L975.4 613.3L976.2 614.9L976.9 616.4L977.6 617.9L978.2 619.2L978.7 620.5L979.2 621.7L979.6 622.7L980.0 623.7L980.4 624.6L980.7 625.3L980.9 626.0L984.3 624.6L984.1 624.0L983.8 623.3L983.5 622.4L983.1 621.4L982.7 620.3L982.2 619.1L981.7 617.7L981.1 616.3L980.4 614.8L979.7 613.3L978.9 611.6L978.1 609.8L977.2 607.8L976.2 605.7L975.1 603.6L974.1 601.4L972.9 599.2L971.8 597.1L970.6 594.9L969.5 592.9L968.3 590.9L967.1 589.0L965.8 587.1L964.6 585.2L963.3 583.3L962.0 581.4L960.6 579.6L959.2 577.7L957.8 575.8L956.3 573.9L954.8 572.0L953.3 570.1L951.7 568.1L950.1 566.2L948.4 564.2L946.7 562.3L944.9 560.3L943.2 558.5L941.3 556.6L939.4 554.8L937.5 553.1L935.6 551.4L933.5 549.8L931.5 548.1L929.4 546.5L927.3 545.0L925.1 543.5L923.0 542.1L920.8 540.7L918.6 539.4L916.4 538.2L914.2 537.0L911.9 535.9L909.7 534.8L907.4 533.8L905.1 532.9L902.7 532.0L900.4 531.2L898.0 530.5L895.6 529.8L893.2 529.2L890.8 528.6L888.3 528.1L885.9 527.7L883.4 527.3L880.9 527.0L878.4 526.7L875.8 526.6L873.2 526.5L870.7 526.4L868.0 526.4L865.4 526.5L862.7 526.7L860.1 526.9L857.4 527.2L854.7 527.5L852.0 527.9L849.2 528.4L846.5 529.0L843.9 529.6L841.2 530.3L838.5 531.0L835.8 531.8L833.0 532.7L830.3 533.6L827.6 534.6L825.0 535.7L822.3 536.9L819.7 538.1L817.2 539.5L814.8 540.9L812.4 542.4L810.0 543.9L807.7 545.6L805.4 547.3L803.2 549.1L801.0 550.9L798.8 552.8L796.7 554.7L794.7 556.7L792.6 558.8L790.6 561.0L788.6 563.3L786.7 565.6L784.8 568.0L783.0 570.4L781.2 572.8L779.5 575.2L777.8 577.5L776.2 579.7L774.7 581.9L773.2 584.0L771.8 586.1L770.5 588.2L769.2 590.3L768.0 592.3L766.8 594.4L765.6 596.5L764.5 598.5L763.5 600.6L762.4 602.7L761.5 604.7L760.5 606.8L759.6 608.9L758.8 610.9L758.0 613.0L757.2 615.0L756.5 617.1L755.9 619.3L755.3 621.4L754.8 623.6L754.3 625.8L754.0 628.0L753.6 630.2L753.3 632.5L753.1 634.7L752.9 637.0L752.7 639.3L752.5 641.6L752.4 643.9L752.2 646.4L752.1 649.1L752.1 651.9L752.0 654.7L752.0 657.5L752.0 660.2L752.1 662.7L752.1 664.9L752.1 666.8L752.1 668.2Z" fill="#554d49"/><path d="M1215.5 668.2L1215.5 666.8L1215.5 664.9L1215.5 662.7L1215.6 660.2L1215.6 657.5L1215.6 654.7L1215.5 651.9L1215.5 649.1L1215.4 646.4L1215.2 643.9L1215.1 641.6L1214.9 639.3L1214.7 637.0L1214.5 634.7L1214.3 632.5L1214.0 630.2L1213.6 628.0L1213.3 625.8L1212.8 623.6L1212.3 621.4L1211.7 619.3L1211.1 617.1L1210.4 615.0L1209.6 613.0L1208.8 610.9L1208.0 608.9L1207.1 606.8L1206.1 604.7L1205.2 602.7L1204.1 600.6L1203.1 598.5L1202.0 596.5L1200.8 594.4L1199.6 592.3L1198.4 590.3L1197.1 588.2L1195.8 586.1L1194.4 584.0L1192.9 581.9L1191.4 579.7L1189.8 577.5L1188.1 575.2L1186.4 572.8L1184.6 570.4L1182.8 568.0L1180.9 565.6L1179.0 563.3L1177.0 561.0L1175.0 558.8L1172.9 556.7L1170.9 554.7L1168.8 552.8L1166.6 550.9L1164.4 549.1L1162.2 547.3L1159.9 545.6L1157.6 543.9L1155.2 542.4L1152.8 540.9L1150.4 539.5L1147.9 538.1L1145.3 536.9L1142.6 535.7L1140.0 534.6L1137.3 533.6L1134.6 532.7L1131.8 531.8L1129.1 531.0L1126.4 530.3L1123.7 529.6L1121.1 529.0L1118.4 528.4L1115.6 527.9L1112.9 527.5L1110.2 527.2L1107.5 526.9L1104.9 526.7L1102.2 526.5L1099.6 526.4L1096.9 526.4L1094.4 526.5L1091.8 526.6L1089.2 526.7L1086.7 527.0L1084.2 527.3L1081.7 527.7L1079.3 528.1L1076.8 528.6L1074.4 529.2L1072.0 529.8L1069.6 530.5L1067.2 531.2L1064.9 532.0L1062.5 532.9L1060.2 533.8L1057.9 534.8L1055.7 535.9L1053.4 537.0L1051.2 538.2L1049.0 539.4L1046.8 540.7L1044.6 542.1L1042.5 543.5L1040.3 545.0L1038.2 546.5L1036.1 548.1L1034.1 549.8L1032.0 551.4L1030.1 553.1L1028.2 554.8L1026.3 556.6L1024.4 558.5L1022.7 560.3L1020.9 562.3L1019.2 564.2L1017.5 566.2L1015.9 568.1L1014.3 570.1L1012.8 572.0L1011.3 573.9L1009.8 575.8L1008.4 577.7L1007.0 579.6L1005.6 581.4L1004.3 583.3L1003.0 585.2L1001.8 587.1L1000.5 589.0L999.3 590.9L998.1 592.9L997.0 594.9L995.8 597.1L994.7 599.2L993.5 601.4L992.5 603.6L991.4 605.7L990.4 607.8L989.5 609.8L988.7 611.6L987.9 613.3L987.2 614.8L986.5 616.3L985.9 617.7L985.4 619.1L984.9 620.3L984.5 621.4L984.1 622.4L983.8 623.3L983.5 624.0L983.3 624.6L986.7 626.0L986.9 625.3L987.2 624.6L987.6 623.7L988.0 622.7L988.4 621.7L988.9 620.5L989.4 619.2L990.0 617.9L990.7 616.4L991.4 614.9L992.2 613.3L993.1 611.5L994.0 609.5L995.0 607.5L996.0 605.4L997.1 603.2L998.2 601.1L999.4 599.0L1000.5 596.9L1001.7 595.0L1002.8 593.1L1004.0 591.2L1005.2 589.4L1006.5 587.5L1007.7 585.7L1009.0 583.9L1010.4 582.1L1011.8 580.3L1013.2 578.5L1014.7 576.6L1016.2 574.8L1017.7 572.9L1019.3 571.0L1020.9 569.1L1022.6 567.2L1024.3 565.4L1026.0 563.5L1027.8 561.8L1029.6 560.0L1031.4 558.4L1033.2 556.8L1035.2 555.2L1037.1 553.6L1039.1 552.1L1041.2 550.6L1043.2 549.1L1045.3 547.7L1047.4 546.4L1049.5 545.2L1051.6 544.0L1053.7 542.8L1055.8 541.8L1058.0 540.8L1060.1 539.8L1062.3 538.9L1064.5 538.1L1066.7 537.3L1068.9 536.6L1071.2 535.9L1073.4 535.3L1075.7 534.7L1078.0 534.2L1080.3 533.8L1082.6 533.4L1085.0 533.1L1087.3 532.8L1089.7 532.6L1092.1 532.5L1094.5 532.4L1097.0 532.3L1099.4 532.3L1101.9 532.4L1104.5 532.6L1107.0 532.7L1109.6 533.0L1112.1 533.3L1114.7 533.7L1117.3 534.1L1119.9 534.6L1122.4 535.1L1125.0 535.7L1127.6 536.4L1130.3 537.1L1132.9 537.9L1135.5 538.7L1138.1 539.6L1140.7 540.6L1143.2 541.6L1145.6 542.7L1148.0 543.9L1150.4 545.1L1152.7 546.5L1155.0 547.9L1157.3 549.3L1159.5 550.9L1161.8 552.5L1163.9 554.2L1166.1 555.9L1168.2 557.7L1170.3 559.5L1172.3 561.4L1174.3 563.5L1176.3 565.6L1178.3 567.8L1180.2 570.1L1182.1 572.4L1184.0 574.7L1185.8 576.9L1187.5 579.2L1189.2 581.3L1190.8 583.4L1192.3 585.5L1193.7 587.5L1195.1 589.5L1196.5 591.5L1197.8 593.5L1199.0 595.5L1200.2 597.5L1201.4 599.4L1202.5 601.5L1203.6 603.5L1204.6 605.5L1205.6 607.5L1206.6 609.5L1207.5 611.5L1208.3 613.5L1209.1 615.5L1209.9 617.5L1210.6 619.6L1211.2 621.7L1211.8 623.8L1212.2 626.0L1212.7 628.2L1213.1 630.4L1213.4 632.6L1213.7 634.8L1213.9 637.1L1214.2 639.4L1214.4 641.7L1214.6 644.0L1214.7 646.4L1214.9 649.1L1214.9 651.9L1215.0 654.7L1215.0 657.5L1215.0 660.2L1215.0 662.7L1215.0 664.9L1215.0 666.8L1215.1 668.2Z" fill="#554d49"/><path d="M762.1 608.6L762.5 607.9L762.9 607.2L763.4 606.2L764.0 605.2L764.6 604.1L765.3 602.9L766.0 601.7L766.7 600.6L767.5 599.5L768.3 598.4L769.0 597.5L769.7 596.6L770.4 595.8L771.1 595.0L771.8 594.2L772.7 593.4L773.6 592.5L774.8 591.5L776.1 590.5L777.7 589.4L779.5 588.1L781.5 586.6L783.8 585.1L786.2 583.5L788.7 581.8L791.4 580.2L794.0 578.6L796.7 577.0L799.4 575.6L802.0 574.3L804.7 573.2L807.4 572.1L810.3 571.1L813.2 570.1L816.1 569.2L819.0 568.3L821.8 567.5L824.6 566.8L827.3 566.2L829.9 565.6L832.3 565.1L834.7 564.7L836.9 564.4L839.1 564.2L841.3 564.0L843.4 563.9L845.5 563.8L847.6 563.8L849.8 563.8L852.0 563.8L854.2 563.8L856.4 563.9L858.6 564.0L860.7 564.1L862.9 564.3L865.1 564.5L867.3 564.7L869.5 565.1L871.8 565.4L874.1 565.9L876.4 566.4L878.8 567.0L881.2 567.7L883.7 568.4L886.2 569.2L888.7 570.0L891.1 570.8L893.5 571.7L895.9 572.7L898.1 573.6L900.3 574.6L902.5 575.7L904.6 576.8L906.7 577.9L908.8 579.1L910.8 580.3L912.8 581.6L914.8 582.8L916.7 584.1L918.6 585.4L920.4 586.8L922.2 588.2L924.0 589.6L925.7 591.0L927.4 592.5L929.1 594.0L930.7 595.5L932.3 597.0L933.9 598.5L935.4 600.1L936.9 601.7L938.3 603.3L939.7 604.9L941.1 606.6L942.4 608.2L943.7 609.9L945.0 611.6L946.2 613.3L947.4 615.0L948.6 616.7L949.7 618.3L950.8 620.1L951.8 621.8L952.9 623.5L953.9 625.3L954.8 627.0L955.7 628.7L956.5 630.3L957.3 631.8L958.1 633.3L958.7 634.7L959.3 636.1L959.9 637.5L960.4 638.8L960.8 640.1L961.2 641.3L961.5 642.4L961.9 643.4L962.1 644.3L962.4 644.9L962.6 644.9L962.4 644.2L962.1 643.3L961.9 642.3L961.6 641.2L961.2 640.0L960.8 638.7L960.4 637.3L959.9 635.9L959.3 634.4L958.7 633.0L958.0 631.5L957.2 629.9L956.4 628.3L955.6 626.6L954.7 624.8L953.7 623.1L952.7 621.3L951.7 619.5L950.6 617.8L949.5 616.0L948.4 614.3L947.2 612.6L946.0 610.9L944.8 609.1L943.5 607.4L942.2 605.7L940.8 604.0L939.4 602.3L938.0 600.6L936.6 599.0L935.0 597.4L933.5 595.8L931.9 594.2L930.3 592.7L928.6 591.1L926.9 589.6L925.2 588.1L923.4 586.6L921.6 585.2L919.8 583.8L917.9 582.4L916.0 581.1L914.0 579.7L912.0 578.4L910.0 577.1L907.9 575.9L905.8 574.7L903.6 573.5L901.4 572.4L899.2 571.3L896.9 570.3L894.5 569.3L892.0 568.4L889.6 567.4L887.1 566.5L884.5 565.7L882.0 564.9L879.5 564.2L877.1 563.6L874.7 563.0L872.3 562.5L870.0 562.1L867.7 561.7L865.5 561.4L863.2 561.1L861.0 561.0L858.7 560.8L856.5 560.7L854.2 560.6L852.0 560.6L849.8 560.6L847.6 560.7L845.4 560.7L843.2 560.9L841.0 561.0L838.8 561.3L836.5 561.6L834.2 561.9L831.8 562.4L829.3 562.9L826.7 563.6L824.0 564.3L821.1 565.1L818.3 565.9L815.3 566.8L812.4 567.8L809.5 568.9L806.6 570.0L803.8 571.2L801.2 572.5L798.5 573.9L795.8 575.4L793.1 577.0L790.4 578.7L787.9 580.5L785.4 582.2L783.0 583.9L780.8 585.6L778.8 587.1L777.0 588.5L775.4 589.7L774.1 590.8L773.0 591.8L772.0 592.7L771.2 593.6L770.5 594.5L769.8 595.3L769.1 596.2L768.4 597.1L767.7 598.0L767.0 599.1L766.2 600.2L765.5 601.4L764.9 602.7L764.2 603.9L763.7 605.0L763.1 606.1L762.7 607.0L762.3 607.8L761.9 608.4Z" fill="#554d49"/><path d="M1205.7 608.4L1205.3 607.8L1204.9 607.0L1204.5 606.1L1203.9 605.0L1203.4 603.9L1202.7 602.7L1202.1 601.4L1201.4 600.2L1200.6 599.1L1199.9 598.0L1199.2 597.1L1198.5 596.2L1197.8 595.3L1197.1 594.5L1196.4 593.6L1195.6 592.7L1194.6 591.8L1193.5 590.8L1192.2 589.7L1190.6 588.5L1188.8 587.1L1186.8 585.6L1184.6 583.9L1182.2 582.2L1179.7 580.5L1177.2 578.7L1174.5 577.0L1171.8 575.4L1169.1 573.9L1166.4 572.5L1163.8 571.2L1161.0 570.0L1158.1 568.9L1155.2 567.8L1152.3 566.8L1149.3 565.9L1146.5 565.1L1143.6 564.3L1140.9 563.6L1138.3 562.9L1135.8 562.4L1133.4 561.9L1131.1 561.6L1128.8 561.3L1126.6 561.0L1124.4 560.9L1122.2 560.7L1120.0 560.7L1117.8 560.6L1115.6 560.6L1113.4 560.6L1111.1 560.7L1108.9 560.8L1106.6 561.0L1104.4 561.1L1102.1 561.4L1099.9 561.7L1097.6 562.1L1095.3 562.5L1092.9 563.0L1090.5 563.6L1088.1 564.2L1085.6 564.9L1083.1 565.7L1080.5 566.5L1078.0 567.4L1075.6 568.4L1073.1 569.3L1070.7 570.3L1068.4 571.3L1066.2 572.4L1064.0 573.5L1061.8 574.7L1059.7 575.9L1057.6 577.1L1055.6 578.4L1053.6 579.7L1051.6 581.1L1049.7 582.4L1047.8 583.8L1046.0 585.2L1044.2 586.6L1042.4 588.1L1040.7 589.6L1039.0 591.1L1037.3 592.7L1035.7 594.2L1034.1 595.8L1032.6 597.4L1031.0 599.0L1029.6 600.6L1028.2 602.3L1026.8 604.0L1025.4 605.7L1024.1 607.4L1022.8 609.1L1021.6 610.9L1020.4 612.6L1019.2 614.3L1018.1 616.0L1017.0 617.8L1015.9 619.5L1014.9 621.3L1013.9 623.1L1012.9 624.8L1012.0 626.6L1011.2 628.3L1010.4 629.9L1009.6 631.5L1008.9 633.0L1008.3 634.4L1007.7 635.9L1007.2 637.3L1006.8 638.7L1006.4 640.0L1006.0 641.2L1005.7 642.3L1005.5 643.3L1005.2 644.2L1005.0 644.9L1005.2 644.9L1005.5 644.3L1005.7 643.4L1006.1 642.4L1006.4 641.3L1006.8 640.1L1007.2 638.8L1007.7 637.5L1008.3 636.1L1008.9 634.7L1009.5 633.3L1010.3 631.8L1011.1 630.3L1011.9 628.7L1012.8 627.0L1013.7 625.3L1014.7 623.5L1015.8 621.8L1016.8 620.1L1017.9 618.3L1019.0 616.7L1020.2 615.0L1021.4 613.3L1022.6 611.6L1023.9 609.9L1025.2 608.2L1026.5 606.6L1027.9 604.9L1029.3 603.3L1030.7 601.7L1032.2 600.1L1033.7 598.5L1035.3 597.0L1036.9 595.5L1038.5 594.0L1040.2 592.5L1041.9 591.0L1043.6 589.6L1045.4 588.2L1047.2 586.8L1049.0 585.4L1050.9 584.1L1052.8 582.8L1054.8 581.6L1056.8 580.3L1058.8 579.1L1060.9 577.9L1063.0 576.8L1065.1 575.7L1067.3 574.6L1069.5 573.6L1071.7 572.7L1074.1 571.7L1076.5 570.8L1078.9 570.0L1081.4 569.2L1083.9 568.4L1086.4 567.7L1088.8 567.0L1091.2 566.4L1093.5 565.9L1095.8 565.4L1098.1 565.1L1100.3 564.7L1102.5 564.5L1104.7 564.3L1106.9 564.1L1109.0 564.0L1111.2 563.9L1113.4 563.8L1115.6 563.8L1117.8 563.8L1120.0 563.8L1122.1 563.8L1124.2 563.9L1126.3 564.0L1128.5 564.2L1130.7 564.4L1132.9 564.7L1135.3 565.1L1137.7 565.6L1140.3 566.2L1143.0 566.8L1145.8 567.5L1148.6 568.3L1151.5 569.2L1154.4 570.1L1157.3 571.1L1160.2 572.1L1162.9 573.2L1165.6 574.3L1168.2 575.6L1170.9 577.0L1173.6 578.6L1176.2 580.2L1178.9 581.8L1181.4 583.5L1183.8 585.1L1186.1 586.6L1188.1 588.1L1189.9 589.4L1191.5 590.5L1192.8 591.5L1194.0 592.5L1194.9 593.4L1195.8 594.2L1196.5 595.0L1197.2 595.8L1197.9 596.6L1198.6 597.5L1199.3 598.4L1200.1 599.5L1200.9 600.6L1201.6 601.7L1202.3 602.9L1203.0 604.1L1203.6 605.2L1204.2 606.2L1204.7 607.2L1205.1 607.9L1205.5 608.6Z" fill="#554d49"/><path d="M752.0 628.0L752.1 629.7L752.0 631.8L752.0 634.3L752.0 637.2L752.0 640.2L752.0 643.5L752.0 646.7L752.1 650.0L752.2 653.1L752.3 656.0L752.5 658.8L752.6 661.6L752.8 664.4L753.1 667.2L753.3 670.0L753.6 672.8L754.0 675.7L754.4 678.5L754.8 681.3L755.3 684.1L755.9 686.9L756.5 689.7L757.1 692.5L757.8 695.3L758.6 698.1L759.4 700.9L760.3 703.7L761.3 706.5L762.3 709.4L763.5 712.3L764.8 715.3L766.2 718.3L767.7 721.5L769.3 724.6L770.9 727.8L772.6 730.9L774.4 733.9L776.3 736.9L778.2 739.6L780.1 742.2L782.1 744.6L784.2 746.9L786.3 749.1L788.5 751.1L790.8 753.1L793.1 754.9L795.4 756.7L797.8 758.4L800.2 760.0L802.6 761.5L805.1 763.0L807.7 764.4L810.3 765.6L813.0 766.8L815.7 767.9L818.4 769.0L821.1 769.9L823.8 770.8L826.4 771.6L829.1 772.4L831.8 773.1L834.4 773.7L837.1 774.3L839.7 774.8L842.4 775.2L845.0 775.5L847.7 775.8L850.3 776.0L853.0 776.2L855.6 776.3L858.3 776.4L860.9 776.4L863.6 776.4L866.3 776.3L868.9 776.1L871.6 775.9L874.2 775.6L876.9 775.2L879.5 774.8L882.2 774.3L884.9 773.7L887.6 773.1L890.3 772.3L893.0 771.5L895.7 770.6L898.3 769.7L901.0 768.7L903.5 767.7L906.1 766.7L908.6 765.6L911.0 764.4L913.4 763.2L915.8 761.9L918.2 760.6L920.5 759.2L922.8 757.8L924.9 756.4L927.0 755.0L929.0 753.7L931.0 752.5L932.8 751.2L934.5 750.0L936.1 748.8L937.7 747.6L939.2 746.5L940.6 745.3L941.9 744.2L943.2 743.1L944.5 741.9L945.7 740.9L946.9 739.7L948.1 738.6L949.3 737.4L950.4 736.2L951.4 735.1L952.4 734.0L953.2 733.0L954.0 732.2L954.7 731.4L955.2 730.8L954.8 730.5L954.2 731.0L953.5 731.7L952.7 732.6L951.8 733.5L950.8 734.5L949.7 735.6L948.5 736.6L947.3 737.7L946.1 738.8L944.9 739.8L943.6 740.9L942.3 741.9L940.9 742.9L939.5 744.0L938.1 745.1L936.6 746.2L935.0 747.3L933.4 748.4L931.6 749.5L929.8 750.6L927.8 751.8L925.8 753.1L923.7 754.4L921.5 755.7L919.2 757.0L916.9 758.3L914.6 759.5L912.2 760.7L909.8 761.8L907.4 762.9L904.9 763.9L902.4 764.8L899.9 765.7L897.3 766.6L894.6 767.4L892.0 768.2L889.3 768.9L886.7 769.5L884.1 770.1L881.5 770.6L878.9 771.0L876.3 771.4L873.8 771.7L871.2 772.0L868.6 772.2L866.1 772.3L863.5 772.4L860.9 772.4L858.4 772.4L855.8 772.3L853.2 772.2L850.6 772.0L848.1 771.8L845.5 771.6L842.9 771.3L840.4 770.9L837.8 770.5L835.2 770.0L832.6 769.4L830.1 768.8L827.5 768.1L824.8 767.3L822.2 766.5L819.6 765.6L816.9 764.6L814.3 763.6L811.7 762.5L809.2 761.4L806.7 760.1L804.3 758.7L801.9 757.3L799.5 755.8L797.2 754.3L794.8 752.6L792.6 750.9L790.3 749.1L788.2 747.2L786.0 745.1L784.0 743.0L782.0 740.7L780.1 738.3L778.1 735.6L776.3 732.8L774.4 729.9L772.7 726.8L771.0 723.7L769.3 720.7L767.8 717.6L766.3 714.6L765.0 711.7L763.8 708.8L762.7 706.0L761.6 703.2L760.7 700.5L759.8 697.7L759.1 695.0L758.3 692.2L757.6 689.4L757.0 686.7L756.4 683.9L755.8 681.1L755.3 678.3L754.9 675.5L754.6 672.7L754.2 669.9L754.0 667.1L753.7 664.4L753.5 661.6L753.3 658.8L753.1 656.0L752.9 653.0L752.8 649.9L752.7 646.7L752.7 643.4L752.6 640.2L752.6 637.2L752.6 634.3L752.6 631.8L752.6 629.7L752.6 628.0Z" fill="#554d49"/><path d="M1215.0 628.0L1215.0 629.7L1215.0 631.8L1215.0 634.3L1215.0 637.2L1215.0 640.2L1214.9 643.4L1214.9 646.7L1214.8 649.9L1214.7 653.0L1214.5 656.0L1214.3 658.8L1214.1 661.6L1213.9 664.4L1213.6 667.1L1213.4 669.9L1213.0 672.7L1212.7 675.5L1212.3 678.3L1211.8 681.1L1211.2 683.9L1210.6 686.7L1210.0 689.4L1209.3 692.2L1208.5 695.0L1207.8 697.7L1206.9 700.5L1206.0 703.2L1204.9 706.0L1203.8 708.8L1202.6 711.7L1201.3 714.6L1199.8 717.6L1198.3 720.7L1196.6 723.7L1194.9 726.8L1193.2 729.9L1191.3 732.8L1189.5 735.6L1187.5 738.3L1185.6 740.7L1183.6 743.0L1181.6 745.1L1179.4 747.2L1177.3 749.1L1175.0 750.9L1172.8 752.6L1170.4 754.3L1168.1 755.8L1165.7 757.3L1163.3 758.7L1160.9 760.1L1158.4 761.4L1155.9 762.5L1153.3 763.6L1150.7 764.6L1148.0 765.6L1145.4 766.5L1142.8 767.3L1140.1 768.1L1137.5 768.8L1135.0 769.4L1132.4 770.0L1129.8 770.5L1127.2 770.9L1124.7 771.3L1122.1 771.6L1119.5 771.8L1117.0 772.0L1114.4 772.2L1111.8 772.3L1109.2 772.4L1106.7 772.4L1104.1 772.4L1101.5 772.3L1099.0 772.2L1096.4 772.0L1093.8 771.7L1091.3 771.4L1088.7 771.0L1086.1 770.6L1083.5 770.1L1080.9 769.5L1078.3 768.9L1075.6 768.2L1073.0 767.4L1070.3 766.6L1067.7 765.7L1065.2 764.8L1062.7 763.9L1060.2 762.9L1057.8 761.8L1055.4 760.7L1053.0 759.5L1050.7 758.3L1048.4 757.0L1046.1 755.7L1043.9 754.4L1041.8 753.1L1039.8 751.8L1037.8 750.6L1036.0 749.5L1034.2 748.4L1032.6 747.3L1031.0 746.2L1029.5 745.1L1028.1 744.0L1026.7 742.9L1025.3 741.9L1024.0 740.9L1022.7 739.8L1021.5 738.8L1020.3 737.7L1019.1 736.6L1017.9 735.6L1016.8 734.5L1015.8 733.5L1014.9 732.6L1014.1 731.7L1013.4 731.0L1012.8 730.5L1012.4 730.8L1012.9 731.4L1013.6 732.2L1014.4 733.0L1015.2 734.0L1016.2 735.1L1017.2 736.2L1018.3 737.4L1019.5 738.6L1020.7 739.7L1021.9 740.9L1023.1 741.9L1024.4 743.1L1025.7 744.2L1027.0 745.3L1028.4 746.5L1029.9 747.6L1031.5 748.8L1033.1 750.0L1034.8 751.2L1036.6 752.5L1038.6 753.7L1040.6 755.0L1042.7 756.4L1044.8 757.8L1047.1 759.2L1049.4 760.6L1051.8 761.9L1054.2 763.2L1056.6 764.4L1059.0 765.6L1061.5 766.7L1064.1 767.7L1066.6 768.7L1069.3 769.7L1071.9 770.6L1074.6 771.5L1077.3 772.3L1080.0 773.1L1082.7 773.7L1085.4 774.3L1088.1 774.8L1090.7 775.2L1093.4 775.6L1096.0 775.9L1098.7 776.1L1101.3 776.3L1104.0 776.4L1106.7 776.4L1109.3 776.4L1112.0 776.3L1114.6 776.2L1117.3 776.0L1119.9 775.8L1122.6 775.5L1125.2 775.2L1127.9 774.8L1130.5 774.3L1133.2 773.7L1135.8 773.1L1138.5 772.4L1141.2 771.6L1143.8 770.8L1146.5 769.9L1149.2 769.0L1151.9 767.9L1154.6 766.8L1157.3 765.6L1159.9 764.4L1162.5 763.0L1165.0 761.5L1167.4 760.0L1169.8 758.4L1172.2 756.7L1174.5 754.9L1176.8 753.1L1179.1 751.1L1181.3 749.1L1183.4 746.9L1185.5 744.6L1187.5 742.2L1189.4 739.6L1191.3 736.9L1193.2 733.9L1195.0 730.9L1196.7 727.8L1198.3 724.6L1199.9 721.5L1201.4 718.3L1202.8 715.3L1204.1 712.3L1205.3 709.4L1206.3 706.5L1207.3 703.7L1208.2 700.9L1209.0 698.1L1209.8 695.3L1210.5 692.5L1211.1 689.7L1211.7 686.9L1212.3 684.1L1212.8 681.3L1213.2 678.5L1213.6 675.7L1214.0 672.8L1214.3 670.0L1214.5 667.2L1214.8 664.4L1215.0 661.6L1215.1 658.8L1215.3 656.0L1215.4 653.1L1215.5 650.0L1215.6 646.7L1215.6 643.5L1215.6 640.2L1215.6 637.2L1215.6 634.3L1215.6 631.8L1215.5 629.7L1215.6 628.0Z" fill="#554d49"/><path d="M787.5 750.9L787.9 751.7L788.4 752.7L789.0 754.0L789.7 755.4L790.5 756.9L791.4 758.5L792.3 760.1L793.3 761.7L794.3 763.3L795.4 764.7L796.6 766.1L797.9 767.5L799.2 769.0L800.6 770.4L802.1 771.9L803.7 773.3L805.2 774.6L806.9 776.0L808.5 777.2L810.2 778.4L811.9 779.5L813.7 780.6L815.4 781.7L817.3 782.6L819.1 783.6L821.0 784.5L823.0 785.3L825.0 786.1L827.0 786.9L829.0 787.6L831.2 788.3L833.4 788.9L835.7 789.5L838.1 790.1L840.4 790.6L842.8 791.0L845.1 791.4L847.4 791.8L849.7 792.1L851.8 792.3L853.9 792.4L855.9 792.5L857.9 792.5L859.8 792.5L861.7 792.4L863.5 792.3L865.4 792.1L867.2 791.8L869.1 791.5L870.9 791.2L872.9 790.8L874.8 790.3L876.7 789.8L878.6 789.3L880.5 788.7L882.4 788.0L884.3 787.3L886.1 786.6L888.0 785.9L889.7 785.1L891.6 784.3L893.5 783.3L895.4 782.3L897.3 781.2L899.2 780.1L900.9 779.1L902.5 778.1L904.0 777.2L905.2 776.5L906.2 775.9L906.0 775.7L905.0 776.1L903.7 776.7L902.2 777.4L900.5 778.2L898.6 779.0L896.6 779.9L894.6 780.7L892.6 781.5L890.7 782.3L888.9 782.9L887.1 783.5L885.3 784.1L883.4 784.7L881.5 785.2L879.7 785.7L877.8 786.2L875.9 786.6L874.0 787.0L872.2 787.4L870.3 787.7L868.5 787.9L866.7 788.2L865.0 788.4L863.2 788.5L861.4 788.6L859.7 788.7L857.9 788.7L856.0 788.7L854.1 788.6L852.1 788.5L850.1 788.2L847.9 788.0L845.7 787.7L843.4 787.3L841.2 786.9L838.9 786.4L836.6 785.9L834.4 785.4L832.2 784.8L830.1 784.2L828.1 783.6L826.1 782.9L824.2 782.2L822.3 781.5L820.4 780.7L818.6 779.9L816.8 779.0L815.1 778.1L813.3 777.2L811.6 776.2L810.0 775.1L808.3 774.0L806.7 772.8L805.1 771.6L803.5 770.3L802.0 769.0L800.5 767.7L799.1 766.3L797.8 765.0L796.6 763.8L795.4 762.4L794.3 761.0L793.2 759.5L792.2 758.0L791.2 756.5L790.3 755.1L789.5 753.7L788.8 752.5L788.2 751.5L787.7 750.7Z" fill="#554d49"/><path d="M1179.9 750.7L1179.4 751.5L1178.8 752.5L1178.1 753.7L1177.3 755.1L1176.4 756.5L1175.4 758.0L1174.4 759.5L1173.3 761.0L1172.2 762.4L1171.0 763.8L1169.8 765.0L1168.5 766.3L1167.1 767.7L1165.6 769.0L1164.1 770.3L1162.5 771.6L1160.9 772.8L1159.3 774.0L1157.6 775.1L1156.0 776.2L1154.3 777.2L1152.5 778.1L1150.8 779.0L1149.0 779.9L1147.2 780.7L1145.3 781.5L1143.4 782.2L1141.5 782.9L1139.5 783.6L1137.5 784.2L1135.4 784.8L1133.2 785.4L1131.0 785.9L1128.7 786.4L1126.4 786.9L1124.2 787.3L1121.9 787.7L1119.7 788.0L1117.5 788.2L1115.5 788.5L1113.5 788.6L1111.6 788.7L1109.7 788.7L1107.9 788.7L1106.2 788.6L1104.4 788.5L1102.6 788.4L1100.9 788.2L1099.1 787.9L1097.3 787.7L1095.4 787.4L1093.6 787.0L1091.7 786.6L1089.8 786.2L1087.9 785.7L1086.1 785.2L1084.2 784.7L1082.3 784.1L1080.5 783.5L1078.7 782.9L1076.9 782.3L1075.0 781.5L1073.0 780.7L1071.0 779.9L1069.0 779.0L1067.1 778.2L1065.4 777.4L1063.9 776.7L1062.6 776.1L1061.6 775.7L1061.4 775.9L1062.4 776.5L1063.6 777.2L1065.1 778.1L1066.7 779.1L1068.4 780.1L1070.3 781.2L1072.2 782.3L1074.1 783.3L1076.0 784.3L1077.9 785.1L1079.6 785.9L1081.5 786.6L1083.3 787.3L1085.2 788.0L1087.1 788.7L1089.0 789.3L1090.9 789.8L1092.8 790.3L1094.7 790.8L1096.7 791.2L1098.5 791.5L1100.4 791.8L1102.2 792.1L1104.1 792.3L1105.9 792.4L1107.8 792.5L1109.7 792.5L1111.7 792.5L1113.7 792.4L1115.8 792.3L1117.9 792.1L1120.2 791.8L1122.5 791.4L1124.8 791.0L1127.2 790.6L1129.5 790.1L1131.9 789.5L1134.2 788.9L1136.4 788.3L1138.6 787.6L1140.6 786.9L1142.6 786.1L1144.6 785.3L1146.6 784.5L1148.5 783.6L1150.3 782.6L1152.2 781.7L1153.9 780.6L1155.7 779.5L1157.4 778.4L1159.1 777.2L1160.7 776.0L1162.4 774.6L1163.9 773.3L1165.5 771.9L1167.0 770.4L1168.4 769.0L1169.7 767.5L1171.0 766.1L1172.2 764.7L1173.3 763.3L1174.3 761.7L1175.3 760.1L1176.2 758.5L1177.1 756.9L1177.9 755.4L1178.6 754.0L1179.2 752.7L1179.7 751.7L1180.1 750.9Z" fill="#554d49"/><rect x="811.900" y="646.300" width="70.900" height="18.700" fill="#554d49"/><rect x="1077.500" y="646.300" width="70.600" height="18.700" fill="#554d49"/><rect x="832.900" y="695.200" width="28.800" height="106.400" fill="url(#fade)"/><rect x="1098.400" y="695.200" width="28.400" height="106.400" fill="url(#fade)"/><path d="M983.8 620 L959 660.300 H1008.6 Z" fill="#554d49" stroke="#554d49" stroke-width="9.400" stroke-linejoin="round"/><path d="M958.100 726.900 H1009.7 L983.8 757 Z" fill="#554d49" stroke="#554d49" stroke-width="8.200" stroke-linejoin="round"/><rect x="978.4" y="752" width="10.800" height="144.600" fill="#554d49"/></svg>
<!-- p_layers -->
<span class="t" style="left:2101.5px;top:125px;font-size:17px;line-height:17px;color:#e4e4e4;transform:scaleX(0.6294);">&lt;&lt;</span>
<span class="t" style="left:2523.5px;top:125px;font-size:17px;line-height:17px;color:#e4e4e4;transform:scaleX(0.6294);">&gt;&gt;</span>
<div class="a" style="left:2130px;top:146px;width:32px;height:46px;background:#464646;border-right:1.500px solid #3b3b3b;overflow:hidden;"><span class="t dc" style="left:16px;top:16px;font-size:15.500px;line-height:15.500px;color:#b4b4b4;font-weight:700;transform:scaleX(0.960)">Pr</span></div>
<div class="a" style="left:2162px;top:146px;width:31.5px;height:46px;background:#464646;border-right:1.500px solid #3b3b3b;overflow:hidden;"><span class="t dc" style="left:16px;top:16px;font-size:15.500px;line-height:15.500px;color:#b4b4b4;font-weight:700;transform:scaleX(0.960)">Bi</span></div>
<div class="a" style="left:2193.5px;top:146px;width:32.3px;height:46px;background:#464646;border-right:1.500px solid #3b3b3b;overflow:hidden;"><span class="t dc" style="left:16px;top:16px;font-size:15.500px;line-height:15.500px;color:#b4b4b4;font-weight:700;transform:scaleX(0.960)">Co</span></div>
<div class="a" style="left:2225.8px;top:146px;width:31.2px;height:46px;background:#464646;border-right:1.500px solid #3b3b3b;overflow:hidden;"><span class="t dc" style="left:16px;top:16px;font-size:15.500px;line-height:15.500px;color:#b4b4b4;font-weight:700;transform:scaleX(0.960)">Sy</span></div>
<div class="a" style="left:2257px;top:146px;width:31.3px;height:46px;background:#464646;border-right:1.500px solid #3b3b3b;overflow:hidden;"><span class="t dc" style="left:16px;top:16px;font-size:15.500px;line-height:15.500px;color:#b4b4b4;font-weight:700;transform:scaleX(0.960)">St</span></div>
<div class="a" style="left:2288.3px;top:146px;width:31.9px;height:46px;background:#464646;border-right:1.500px solid #3b3b3b;overflow:hidden;"><span class="t dc" style="left:16px;top:16px;font-size:15.500px;line-height:15.500px;color:#b4b4b4;font-weight:700;transform:scaleX(0.960)">Op</span></div>
<div class="a" style="left:2320.2px;top:146px;width:93.2px;height:47px;background:#535353;"></div>
<span class="t dc" style="left:2335.3px;top:162px;font-size:15.5px;line-height:15.5px;color:#ffffff;font-weight:700;transform:scaleX(1.0017);">Calques</span>
<div class="a" style="left:2413.4px;top:146px;width:32.1px;height:46px;background:#464646;border-right:1.500px solid #3b3b3b;overflow:hidden;"><span class="t dc" style="left:16px;top:16px;font-size:15.500px;line-height:15.500px;color:#b4b4b4;font-weight:700;transform:scaleX(0.960)">Co</span></div>
<div class="a" style="left:2445.5px;top:146px;width:31.9px;height:46px;background:#464646;border-right:1.500px solid #3b3b3b;overflow:hidden;"><span class="t dc" style="left:16px;top:16px;font-size:15.500px;line-height:15.500px;color:#b4b4b4;font-weight:700;transform:scaleX(0.960)">Nu</span></div>
<div class="a" style="left:2138px;top:203px;width:399px;height:61px;border:1px solid #5e5e5e;border-radius:4px;"></div>
<div class="a" style="left:2138px;top:264.5px;width:399px;height:1083px;border:1px solid #5e5e5e;border-radius:4px;"></div>
<div class="a" style="left:2149.5px;top:211px;width:335px;height:39px;background:#444444;border:1px solid #5a5a5a;border-radius:5px;"></div>
<span class="t" style="left:2199px;top:220px;font-size:20px;line-height:20px;color:#686868;transform:scaleX(1.0458);">Rechercher dans tout</span>
<span class="t" style="left:2305.7px;top:277px;font-size:18px;line-height:18px;color:#e8e8e8;transform:scaleX(0.9242);">Calque 1</span>
<span class="t" style="left:2348px;top:313px;font-size:18px;line-height:18px;color:#e8e8e8;transform:scaleX(0.9670);">&lt;Ecrêt...</span>
<span class="t" style="left:2348px;top:350px;font-size:18px;line-height:18px;color:#e8e8e8;transform:scaleX(0.9670);">&lt;Ecrêt...</span>
<span class="t" style="left:2348px;top:387px;font-size:18px;line-height:18px;color:#e8e8e8;transform:scaleX(0.9507);">&lt;Tracé&gt;</span>
<span class="t" style="left:2348px;top:424px;font-size:18px;line-height:18px;color:#e8e8e8;transform:scaleX(0.9507);">&lt;Tracé&gt;</span>
<span class="t" style="left:2348px;top:460px;font-size:18px;line-height:18px;color:#e8e8e8;transform:scaleX(0.9507);">&lt;Tracé&gt;</span>
<span class="t" style="left:2348px;top:497px;font-size:18px;line-height:18px;color:#e8e8e8;transform:scaleX(0.9507);">&lt;Tracé&gt;</span>
<span class="t" style="left:2348px;top:534px;font-size:18px;line-height:18px;color:#e8e8e8;transform:scaleX(0.9507);">&lt;Tracé&gt;</span>
<span class="t" style="left:2348px;top:571px;font-size:18px;line-height:18px;color:#e8e8e8;transform:scaleX(0.9507);">&lt;Tracé&gt;</span>
<span class="t" style="left:2348px;top:608px;font-size:18px;line-height:18px;color:#e8e8e8;transform:scaleX(0.9507);">&lt;Tracé&gt;</span>
<span class="t" style="left:2348px;top:644px;font-size:18px;line-height:18px;color:#e8e8e8;transform:scaleX(0.9507);">&lt;Tracé&gt;</span>
<span class="t" style="left:2348px;top:681px;font-size:18px;line-height:18px;color:#e8e8e8;transform:scaleX(0.9507);">&lt;Tracé&gt;</span>
<span class="t" style="left:2348px;top:718px;font-size:18px;line-height:18px;color:#e8e8e8;transform:scaleX(0.9507);">&lt;Tracé&gt;</span>
<span class="t" style="left:2348px;top:755px;font-size:18px;line-height:18px;color:#e8e8e8;transform:scaleX(0.9507);">&lt;Tracé&gt;</span>
<span class="t" style="left:2348px;top:791px;font-size:18px;line-height:18px;color:#e8e8e8;transform:scaleX(0.9515);">&lt;Rect...</span>
<span class="t" style="left:2348px;top:828px;font-size:18px;line-height:18px;color:#e8e8e8;transform:scaleX(0.9515);">&lt;Rect...</span>
<span class="t" style="left:2348px;top:865px;font-size:18px;line-height:18px;color:#e8e8e8;transform:scaleX(0.9507);">&lt;Tracé&gt;</span>
<span class="t" style="left:2348px;top:902px;font-size:18px;line-height:18px;color:#e8e8e8;transform:scaleX(0.9425);">&lt;Poly...</span>
<span class="t" style="left:2348px;top:938px;font-size:18px;line-height:18px;color:#e8e8e8;transform:scaleX(0.9515);">&lt;Rect...</span>
<span class="t" style="left:2348px;top:975px;font-size:18px;line-height:18px;color:#e8e8e8;transform:scaleX(0.9515);">&lt;Rect...</span>
<span class="t" style="left:2348px;top:1012px;font-size:18px;line-height:18px;color:#e8e8e8;transform:scaleX(0.9507);">&lt;Tracé&gt;</span>
<span class="t" style="left:2348px;top:1049px;font-size:18px;line-height:18px;color:#e8e8e8;transform:scaleX(0.9545);">&lt;Répét...</span>
<div class="a" style="left:2139px;top:1075.5px;width:396px;height:37px;background:#4b6785;"></div>
<span class="t" style="left:2305.7px;top:1086px;font-size:18px;line-height:18px;color:#e8e8e8;transform:scaleX(0.9339);">Calque 2</span>
<span class="t" style="left:2138.4px;top:1357px;font-size:18px;line-height:18px;color:#e0e0e0;transform:scaleX(0.9202);">2 Ca...</span>
<svg width="2560" height="1393" style="left:0;top:0" viewBox="0 0 2560 1393"><rect x="2518" y="162.5" width="18" height="2" fill="#b8b8b8"/><rect x="2518" y="168.5" width="18" height="2" fill="#b8b8b8"/><rect x="2518" y="174.5" width="18" height="2" fill="#b8b8b8"/><circle cx="2166" cy="229" r="6.300" fill="none" stroke="#dadada" stroke-width="2.400"/><path d="M2171 234 L2179 240" stroke="#dadada" stroke-width="3" stroke-linecap="round"/><path d="M2504 219 H2527 L2518.500 230.500 V239 L2512.500 243 V230.500 Z" fill="#cfcfcf"/><path d="M2145.4 282.9 Q2156.4 270.4 2167.4 282.9 Q2156.4 295.4 2145.4 282.9 Z" fill="#cfcfcf"/><circle cx="2156.4" cy="282.9" r="4.600" fill="#535353"/><circle cx="2156.4" cy="282.9" r="2.600" fill="#cfcfcf"/><circle cx="2157.8" cy="281.3" r="1.500" fill="#535353"/><rect x="2214.500" y="269.0" width="6" height="31.500" fill="#4d7cfe"/><path d="M2235.500 282.5 L2241.700 288.7 L2248 282.5" fill="none" stroke="#f0f0f0" stroke-width="2"/><rect x="2266" y="269.4" width="32" height="31.800" fill="#000"/><rect x="2268" y="271.4" width="28" height="27.800" fill="#fff"/><g transform="translate(2268 271.4)"><g fill="none" stroke="#554d49" stroke-width="0.700"><circle cx="13.500" cy="10.500" r="2"/><circle cx="17.500" cy="10.500" r="2"/><path d="M15.500 11 v5 M12 9 v-1.500 M19 9 v-1.500"/></g></g><circle cx="2492" cy="285.5" r="6.300" fill="none" stroke="#dadada" stroke-width="1.800"/><rect x="2139" y="303.0" width="396" height="1" fill="#5f5f5f" opacity="0.850"/><rect x="2214.500" y="305.8" width="6" height="31.500" fill="#4d7cfe"/><path d="M2275.500 315.8 L2282 322.3 L2275.500 328.8" fill="none" stroke="#f0f0f0" stroke-width="2"/><rect x="2306" y="306.17" width="32" height="31.800" fill="#000"/><rect x="2308" y="308.17" width="28" height="27.800" fill="#fff"/><g transform="translate(2308 308.17)"><path d="M14 4 l2 5 l5 -3 l-2 5 l6 1 l-5 3 l3 5 l-6 -2 l-1 5 l-3 -4 l-4 3 l1 -5 l-6 -1 l5 -3 l-4 -5 l6 2 z" fill="#e6e6e6"/></g><circle cx="2492" cy="322.3" r="6.300" fill="#8e8e8e" stroke="#c2c2c2" stroke-width="1.800"/><rect x="2139" y="339.7" width="396" height="1" fill="#5f5f5f" opacity="0.850"/><rect x="2214.500" y="342.5" width="6" height="31.500" fill="#4d7cfe"/><path d="M2275.500 352.5 L2282 359.0 L2275.500 365.5" fill="none" stroke="#f0f0f0" stroke-width="2"/><rect x="2306" y="342.94" width="32" height="31.800" fill="#000"/><rect x="2308" y="344.94" width="28" height="27.800" fill="#fff"/><g transform="translate(2308 344.94)"><path d="M14 4 l2 6 l6 -4 l-3 6 l7 1 l-6 3 l4 6 l-7 -3 l-1 6 l-3 -5 l-5 4 l2 -6 l-7 -1 l6 -3 l-5 -6 l7 3 z" fill="#9a9a9a"/><path d="M14 9 l1 4 l4 -2 l-2 4 l4 1 l-4 2 l2 3 l-4 -1 l-1 3 l-2 -3 l-3 2 l1 -3 l-4 -1 l4 -2 l-2 -4 l4 2 z" fill="#6a6a6a"/></g><circle cx="2492" cy="359.0" r="6.300" fill="#8e8e8e" stroke="#c2c2c2" stroke-width="1.800"/><rect x="2139" y="376.5" width="396" height="1" fill="#5f5f5f" opacity="0.850"/><path d="M2145.4 393.21 Q2156.4 380.71 2167.4 393.21 Q2156.4 405.71 2145.4 393.21 Z" fill="#cfcfcf"/><circle cx="2156.4" cy="393.21" r="4.600" fill="#535353"/><circle cx="2156.4" cy="393.21" r="2.600" fill="#cfcfcf"/><circle cx="2157.8" cy="391.61" r="1.500" fill="#535353"/><rect x="2214.500" y="379.3" width="6" height="31.500" fill="#4d7cfe"/><rect x="2306" y="379.71" width="32" height="31.800" fill="#000"/><rect x="2308" y="381.71" width="28" height="27.800" fill="#fff"/><g transform="translate(2308 381.71)"><path d="M0.800 25.500 C0.800 11 5 4.800 14 4.800 C23 4.800 27.200 11 27.200 25.500" fill="none" stroke="#111" stroke-width="1.7"/></g><circle cx="2492" cy="395.8" r="6.300" fill="none" stroke="#dadada" stroke-width="1.800"/><rect x="2139" y="413.3" width="396" height="1" fill="#5f5f5f" opacity="0.850"/><path d="M2145.4 429.98 Q2156.4 417.48 2167.4 429.98 Q2156.4 442.48 2145.4 429.98 Z" fill="#cfcfcf"/><circle cx="2156.4" cy="429.98" r="4.600" fill="#535353"/><circle cx="2156.4" cy="429.98" r="2.600" fill="#cfcfcf"/><circle cx="2157.8" cy="428.38" r="1.500" fill="#535353"/><rect x="2214.500" y="416.1" width="6" height="31.500" fill="#4d7cfe"/><rect x="2306" y="416.48" width="32" height="31.800" fill="#000"/><rect x="2308" y="418.48" width="28" height="27.800" fill="#fff"/><g transform="translate(2308 418.48)"><path d="M0.700 27.500 C0.700 12 5 5 14 5 C22 5 27.300 10 27.300 20" fill="none" stroke="#555" stroke-width="0.9"/></g><circle cx="2492" cy="432.6" r="6.300" fill="#8e8e8e" stroke="#c2c2c2" stroke-width="1.800"/><rect x="2139" y="450.1" width="396" height="1" fill="#5f5f5f" opacity="0.850"/><path d="M2145.4 466.75 Q2156.4 454.25 2167.4 466.75 Q2156.4 479.25 2145.4 466.75 Z" fill="#cfcfcf"/><circle cx="2156.4" cy="466.75" r="4.600" fill="#535353"/><circle cx="2156.4" cy="466.75" r="2.600" fill="#cfcfcf"/><circle cx="2157.8" cy="465.15" r="1.500" fill="#535353"/><rect x="2214.500" y="452.9" width="6" height="31.500" fill="#4d7cfe"/><rect x="2306" y="453.25" width="32" height="31.800" fill="#000"/><rect x="2308" y="455.25" width="28" height="27.800" fill="#fff"/><g transform="translate(2308 455.25)"><path d="M0.700 4 C0.700 14 6 20 14 20 C22 20 27.300 14 27.300 4" fill="none" stroke="#555" stroke-width="0.9"/></g><circle cx="2492" cy="469.4" r="6.300" fill="#8e8e8e" stroke="#c2c2c2" stroke-width="1.800"/><rect x="2139" y="486.8" width="396" height="1" fill="#5f5f5f" opacity="0.850"/><path d="M2145.4 503.52 Q2156.4 491.02 2167.4 503.52 Q2156.4 516.02 2145.4 503.52 Z" fill="#cfcfcf"/><circle cx="2156.4" cy="503.52" r="4.600" fill="#535353"/><circle cx="2156.4" cy="503.52" r="2.600" fill="#cfcfcf"/><circle cx="2157.8" cy="501.92" r="1.500" fill="#535353"/><rect x="2214.500" y="489.6" width="6" height="31.500" fill="#4d7cfe"/><rect x="2306" y="490.02" width="32" height="31.800" fill="#000"/><rect x="2308" y="492.02" width="28" height="27.800" fill="#fff"/><g transform="translate(2308 492.02)"><path d="M0.700 22 C2 12 7 6.500 14 6.500 C21 6.500 26 12 27.300 22" fill="none" stroke="#555" stroke-width="0.9"/></g><circle cx="2492" cy="506.1" r="6.300" fill="#8e8e8e" stroke="#c2c2c2" stroke-width="1.800"/><rect x="2139" y="523.6" width="396" height="1" fill="#5f5f5f" opacity="0.850"/><path d="M2145.4 540.29 Q2156.4 527.79 2167.4 540.29 Q2156.4 552.79 2145.4 540.29 Z" fill="#cfcfcf"/><circle cx="2156.4" cy="540.29" r="4.600" fill="#535353"/><circle cx="2156.4" cy="540.29" r="2.600" fill="#cfcfcf"/><circle cx="2157.8" cy="538.69" r="1.500" fill="#535353"/><rect x="2214.500" y="526.4" width="6" height="31.500" fill="#4d7cfe"/><rect x="2306" y="526.79" width="32" height="31.800" fill="#000"/><rect x="2308" y="528.79" width="28" height="27.800" fill="#fff"/><g transform="translate(2308 528.79)"><path d="M0.700 8 C1 13 6 15 13 15 C21 15 27.300 13 27.300 5" fill="none" stroke="#555" stroke-width="0.9"/></g><circle cx="2492" cy="542.9" r="6.300" fill="#8e8e8e" stroke="#c2c2c2" stroke-width="1.800"/><rect x="2139" y="560.4" width="396" height="1" fill="#5f5f5f" opacity="0.850"/><path d="M2145.4 577.06 Q2156.4 564.56 2167.4 577.06 Q2156.4 589.56 2145.4 577.06 Z" fill="#cfcfcf"/><circle cx="2156.4" cy="577.06" r="4.600" fill="#535353"/><circle cx="2156.4" cy="577.06" r="2.600" fill="#cfcfcf"/><circle cx="2157.8" cy="575.46" r="1.500" fill="#535353"/><rect x="2214.500" y="563.2" width="6" height="31.500" fill="#4d7cfe"/><rect x="2306" y="563.56" width="32" height="31.800" fill="#000"/><rect x="2308" y="565.56" width="28" height="27.800" fill="#fff"/><g transform="translate(2308 565.56)"><path d="M0.700 4 C1 12 6 17 14 17.500 C20 18 25 17.500 27.300 16.500" fill="none" stroke="#555" stroke-width="0.9"/></g><circle cx="2492" cy="579.7" r="6.300" fill="#8e8e8e" stroke="#c2c2c2" stroke-width="1.800"/><rect x="2139" y="597.1" width="396" height="1" fill="#5f5f5f" opacity="0.850"/><path d="M2145.4 613.83 Q2156.4 601.33 2167.4 613.83 Q2156.4 626.33 2145.4 613.83 Z" fill="#cfcfcf"/><circle cx="2156.4" cy="613.83" r="4.600" fill="#535353"/><circle cx="2156.4" cy="613.83" r="2.600" fill="#cfcfcf"/><circle cx="2157.8" cy="612.23" r="1.500" fill="#535353"/><rect x="2214.500" y="599.9" width="6" height="31.500" fill="#4d7cfe"/><rect x="2306" y="600.33" width="32" height="31.800" fill="#000"/><rect x="2308" y="602.33" width="28" height="27.800" fill="#fff"/><g transform="translate(2308 602.33)"><path d="M0.700 3 C1 13 7 21 16 22 C21 22.500 25 20 27.300 17.500" fill="none" stroke="#555" stroke-width="0.9"/></g><circle cx="2492" cy="616.4" r="6.300" fill="#8e8e8e" stroke="#c2c2c2" stroke-width="1.800"/><rect x="2139" y="633.9" width="396" height="1" fill="#5f5f5f" opacity="0.850"/><path d="M2145.4 650.6 Q2156.4 638.1 2167.4 650.6 Q2156.4 663.1 2145.4 650.6 Z" fill="#cfcfcf"/><circle cx="2156.4" cy="650.6" r="4.600" fill="#535353"/><circle cx="2156.4" cy="650.6" r="2.600" fill="#cfcfcf"/><circle cx="2157.8" cy="649" r="1.500" fill="#535353"/><rect x="2214.500" y="636.7" width="6" height="31.500" fill="#4d7cfe"/><rect x="2306" y="637.1" width="32" height="31.800" fill="#000"/><rect x="2308" y="639.1" width="28" height="27.800" fill="#fff"/><g transform="translate(2308 639.1)"><path d="M0.700 20 C3 11 8 6.500 14 6.500 C21 6.500 26.500 12 27.300 22" fill="none" stroke="#555" stroke-width="0.9"/></g><circle cx="2492" cy="653.2" r="6.300" fill="#8e8e8e" stroke="#c2c2c2" stroke-width="1.800"/><rect x="2139" y="670.7" width="396" height="1" fill="#5f5f5f" opacity="0.850"/><path d="M2145.4 687.37 Q2156.4 674.87 2167.4 687.37 Q2156.4 699.87 2145.4 687.37 Z" fill="#cfcfcf"/><circle cx="2156.4" cy="687.37" r="4.600" fill="#535353"/><circle cx="2156.4" cy="687.37" r="2.600" fill="#cfcfcf"/><circle cx="2157.8" cy="685.77" r="1.500" fill="#535353"/><rect x="2214.500" y="673.5" width="6" height="31.500" fill="#4d7cfe"/><rect x="2306" y="673.87" width="32" height="31.800" fill="#000"/><rect x="2308" y="675.87" width="28" height="27.800" fill="#fff"/><g transform="translate(2308 675.87)"><path d="M0.700 25 C1 13 6 6.500 14 6.500 C22 6.500 27 13 27.300 25" fill="none" stroke="#555" stroke-width="0.9"/></g><circle cx="2492" cy="690.0" r="6.300" fill="#8e8e8e" stroke="#c2c2c2" stroke-width="1.800"/><rect x="2139" y="707.4" width="396" height="1" fill="#5f5f5f" opacity="0.850"/><path d="M2145.4 724.14 Q2156.4 711.64 2167.4 724.14 Q2156.4 736.64 2145.4 724.14 Z" fill="#cfcfcf"/><circle cx="2156.4" cy="724.14" r="4.600" fill="#535353"/><circle cx="2156.4" cy="724.14" r="2.600" fill="#cfcfcf"/><circle cx="2157.8" cy="722.54" r="1.500" fill="#535353"/><rect x="2214.500" y="710.2" width="6" height="31.500" fill="#4d7cfe"/><rect x="2306" y="710.64" width="32" height="31.800" fill="#000"/><rect x="2308" y="712.64" width="28" height="27.800" fill="#fff"/><g transform="translate(2308 712.64)"><path d="M5 12 Q11 5 22 1.500 V22 Q13 21 5 26 Z" fill="#554d49"/></g><circle cx="2492" cy="726.7" r="6.300" fill="none" stroke="#dadada" stroke-width="1.800"/><rect x="2139" y="744.2" width="396" height="1" fill="#5f5f5f" opacity="0.850"/><path d="M2145.4 760.91 Q2156.4 748.41 2167.4 760.91 Q2156.4 773.41 2145.4 760.91 Z" fill="#cfcfcf"/><circle cx="2156.4" cy="760.91" r="4.600" fill="#535353"/><circle cx="2156.4" cy="760.91" r="2.600" fill="#cfcfcf"/><circle cx="2157.8" cy="759.31" r="1.500" fill="#535353"/><rect x="2214.500" y="747.0" width="6" height="31.500" fill="#4d7cfe"/><rect x="2306" y="747.41" width="32" height="31.800" fill="#000"/><rect x="2308" y="749.41" width="28" height="27.800" fill="#fff"/><g transform="translate(2308 749.41)"><path d="M4 2 Q15 5 23 13 V26.500 Q14 22 4 23.500 Z" fill="#554d49"/></g><circle cx="2492" cy="763.5" r="6.300" fill="none" stroke="#dadada" stroke-width="1.800"/><rect x="2139" y="781.0" width="396" height="1" fill="#5f5f5f" opacity="0.850"/><path d="M2145.4 797.68 Q2156.4 785.18 2167.4 797.68 Q2156.4 810.18 2145.4 797.68 Z" fill="#cfcfcf"/><circle cx="2156.4" cy="797.68" r="4.600" fill="#535353"/><circle cx="2156.4" cy="797.68" r="2.600" fill="#cfcfcf"/><circle cx="2157.8" cy="796.08" r="1.500" fill="#535353"/><rect x="2214.500" y="783.8" width="6" height="31.500" fill="#4d7cfe"/><rect x="2306" y="784.18" width="32" height="31.800" fill="#000"/><rect x="2308" y="786.18" width="28" height="27.800" fill="#fff"/><g transform="translate(2308 786.18)"><defs><linearGradient id="tf" x1="0" y1="0" x2="0" y2="1"><stop offset="0" stop-color="#554d49"/><stop offset="0.800" stop-color="#554d49"/><stop offset="1" stop-color="#554d49" stop-opacity="0.100"/></linearGradient></defs><rect x="10" y="0" width="8" height="27.500" fill="url(#tf)"/></g><circle cx="2492" cy="800.3" r="6.300" fill="none" stroke="#dadada" stroke-width="1.800"/><rect x="2139" y="817.8" width="396" height="1" fill="#5f5f5f" opacity="0.850"/><path d="M2145.4 834.45 Q2156.4 821.95 2167.4 834.45 Q2156.4 846.95 2145.4 834.45 Z" fill="#cfcfcf"/><circle cx="2156.4" cy="834.45" r="4.600" fill="#535353"/><circle cx="2156.4" cy="834.45" r="2.600" fill="#cfcfcf"/><circle cx="2157.8" cy="832.85" r="1.500" fill="#535353"/><rect x="2214.500" y="820.5" width="6" height="31.500" fill="#4d7cfe"/><rect x="2306" y="820.95" width="32" height="31.800" fill="#000"/><rect x="2308" y="822.95" width="28" height="27.800" fill="#fff"/><g transform="translate(2308 822.95)"><rect x="10" y="0" width="8" height="27.500" fill="url(#tf)"/></g><circle cx="2492" cy="837.0" r="6.300" fill="none" stroke="#dadada" stroke-width="1.800"/><rect x="2139" y="854.5" width="396" height="1" fill="#5f5f5f" opacity="0.850"/><path d="M2145.4 871.22 Q2156.4 858.72 2167.4 871.22 Q2156.4 883.72 2145.4 871.22 Z" fill="#cfcfcf"/><circle cx="2156.4" cy="871.22" r="4.600" fill="#535353"/><circle cx="2156.4" cy="871.22" r="2.600" fill="#cfcfcf"/><circle cx="2157.8" cy="869.62" r="1.500" fill="#535353"/><rect x="2214.500" y="857.3" width="6" height="31.500" fill="#4d7cfe"/><rect x="2306" y="857.72" width="32" height="31.800" fill="#000"/><rect x="2308" y="859.72" width="28" height="27.800" fill="#fff"/><g transform="translate(2308 859.72)"><path d="M9 1 H19 L15 6 V27.500 H13 V6 Z" fill="#554d49"/></g><circle cx="2492" cy="873.8" r="6.300" fill="none" stroke="#dadada" stroke-width="1.800"/><rect x="2139" y="891.3" width="396" height="1" fill="#5f5f5f" opacity="0.850"/><path d="M2145.4 907.99 Q2156.4 895.49 2167.4 907.99 Q2156.4 920.49 2145.4 907.99 Z" fill="#cfcfcf"/><circle cx="2156.4" cy="907.99" r="4.600" fill="#535353"/><circle cx="2156.4" cy="907.99" r="2.600" fill="#cfcfcf"/><circle cx="2157.8" cy="906.39" r="1.500" fill="#535353"/><rect x="2214.500" y="894.1" width="6" height="31.500" fill="#4d7cfe"/><rect x="2306" y="894.49" width="32" height="31.800" fill="#000"/><rect x="2308" y="896.49" width="28" height="27.800" fill="#fff"/><g transform="translate(2308 896.49)"><path d="M14 3 L25.500 23 H2.500 Z" fill="#554d49" stroke="#554d49" stroke-width="3" stroke-linejoin="round"/></g><circle cx="2492" cy="910.6" r="6.300" fill="none" stroke="#dadada" stroke-width="1.800"/><rect x="2139" y="928.1" width="396" height="1" fill="#5f5f5f" opacity="0.850"/><path d="M2145.4 944.76 Q2156.4 932.26 2167.4 944.76 Q2156.4 957.26 2145.4 944.76 Z" fill="#cfcfcf"/><circle cx="2156.4" cy="944.76" r="4.600" fill="#535353"/><circle cx="2156.4" cy="944.76" r="2.600" fill="#cfcfcf"/><circle cx="2157.8" cy="943.16" r="1.500" fill="#535353"/><rect x="2214.500" y="930.9" width="6" height="31.500" fill="#4d7cfe"/><rect x="2306" y="931.26" width="32" height="31.800" fill="#000"/><rect x="2308" y="933.26" width="28" height="27.800" fill="#fff"/><g transform="translate(2308 933.26)"><rect x="0" y="10" width="28" height="7.500" fill="#554d49"/></g><circle cx="2492" cy="947.4" r="6.300" fill="none" stroke="#dadada" stroke-width="1.800"/><rect x="2139" y="964.8" width="396" height="1" fill="#5f5f5f" opacity="0.850"/><path d="M2145.4 981.53 Q2156.4 969.03 2167.4 981.53 Q2156.4 994.03 2145.4 981.53 Z" fill="#cfcfcf"/><circle cx="2156.4" cy="981.53" r="4.600" fill="#535353"/><circle cx="2156.4" cy="981.53" r="2.600" fill="#cfcfcf"/><circle cx="2157.8" cy="979.93" r="1.500" fill="#535353"/><rect x="2214.500" y="967.6" width="6" height="31.500" fill="#4d7cfe"/><rect x="2306" y="968.03" width="32" height="31.800" fill="#000"/><rect x="2308" y="970.03" width="28" height="27.800" fill="#fff"/><g transform="translate(2308 970.03)"><rect x="0" y="10" width="28" height="7.500" fill="#554d49"/></g><circle cx="2492" cy="984.1" r="6.300" fill="none" stroke="#dadada" stroke-width="1.800"/><rect x="2139" y="1001.6" width="396" height="1" fill="#5f5f5f" opacity="0.850"/><path d="M2145.4 1018.3 Q2156.4 1005.8 2167.4 1018.3 Q2156.4 1030.8 2145.4 1018.3 Z" fill="#cfcfcf"/><circle cx="2156.4" cy="1018.3" r="4.600" fill="#535353"/><circle cx="2156.4" cy="1018.3" r="2.600" fill="#cfcfcf"/><circle cx="2157.8" cy="1016.7" r="1.500" fill="#535353"/><rect x="2214.500" y="1004.4" width="6" height="31.500" fill="#4d7cfe"/><rect x="2306" y="1004.8" width="32" height="31.800" fill="#000"/><rect x="2308" y="1006.8" width="28" height="27.800" fill="#fff"/><g transform="translate(2308 1006.8)"><rect x="0" y="0" width="28" height="27.500" fill="#fbf8ee"/><path d="M0 0 h3 q-3 0 -3 3z M28 0 h-3 q3 0 3 3z M0 27.500 h4 q-4 0 -4 -4z M28 27.500 h-4 q4 0 4 -4z" fill="#fff"/></g><circle cx="2492" cy="1020.9" r="6.300" fill="none" stroke="#dadada" stroke-width="1.800"/><rect x="2139" y="1038.4" width="396" height="1" fill="#5f5f5f" opacity="0.850"/><rect x="2214.500" y="1041.2" width="6" height="31.500" fill="#4d7cfe"/><rect x="2306" y="1041.57" width="32" height="31.800" fill="#000"/><rect x="2308" y="1043.57" width="28" height="27.800" fill="#fff"/><g transform="translate(2308 1043.57)"><g fill="#e2b93b"><path d="M20.9 12.4 L27.6 13.8 L20.9 15.1 Z"/><path d="M20.9 15.1 L26.6 19.0 L19.8 17.7 Z"/><path d="M19.8 17.6 L23.6 23.4 L17.9 19.6 Z"/><path d="M17.9 19.6 L19.2 26.3 L15.3 20.6 Z"/><path d="M15.4 20.6 L14.0 27.4 L12.6 20.6 Z"/><path d="M12.7 20.6 L8.8 26.3 L10.1 19.6 Z"/><path d="M10.1 19.6 L4.4 23.4 L8.2 17.6 Z"/><path d="M8.2 17.7 L1.4 19.0 L7.1 15.1 Z"/><path d="M7.1 15.1 L0.4 13.8 L7.1 12.4 Z"/><path d="M7.1 12.4 L1.4 8.5 L8.2 9.8 Z"/><path d="M8.2 9.9 L4.4 4.1 L10.1 7.9 Z"/><path d="M10.1 7.9 L8.8 1.2 L12.7 6.9 Z"/><path d="M12.6 6.9 L14.0 0.2 L15.4 6.9 Z"/><path d="M15.3 6.9 L19.2 1.2 L17.9 7.9 Z"/><path d="M17.9 7.9 L23.6 4.1 L19.8 9.9 Z"/><path d="M19.8 9.8 L26.6 8.5 L20.9 12.4 Z"/></g><circle cx="14" cy="13.750" r="7" fill="none" stroke="#e2b93b" stroke-width="3"/></g><circle cx="2492" cy="1057.7" r="6.300" fill="none" stroke="#dadada" stroke-width="1.800"/><rect x="2139" y="1075.1" width="396" height="1" fill="#5f5f5f" opacity="0.850"/><rect x="2214.500" y="1077.9" width="6" height="31.500" fill="#ff4d4d"/><path d="M2235 1087.9 L2241.500 1094.4 L2235 1100.9" fill="none" stroke="#f0f0f0" stroke-width="2"/><rect x="2266" y="1078.34" width="32" height="31.800" fill="#000"/><rect x="2268" y="1080.34" width="28" height="27.800" fill="#fff"/><g transform="translate(2268 1080.34)"><defs><radialGradient id="tg" cx="0.5" cy="0.55" r="0.6"><stop offset="0" stop-color="#a8a19d"/><stop offset="1" stop-color="#5b5450"/></radialGradient></defs><rect x="3.500" y="0" width="21" height="27.500" fill="url(#tg)"/></g><circle cx="2492" cy="1094.4" r="6.300" fill="none" stroke="#dadada" stroke-width="1.800"/><rect x="2175" y="266" width="1" height="846" fill="#5f5f5f" opacity="0.700"/><rect x="2212" y="266" width="1" height="846" fill="#5f5f5f" opacity="0.700"/><rect x="2472.5" y="266" width="1" height="846" fill="#5f5f5f" opacity="0.700"/><path d="M2524 1076 H2535 V1087 Z" fill="#d4d4d4"/><g transform="translate(2040 1100) scale(0.21035)" fill="none" stroke="#cfcfcf" stroke-width="10"><path d="M815 1235 V1300 M800 1245 H885 M800 1300 H860 M878 1228 V1262"/><path d="M865 1265 H908 V1322 L886 1300 L865 1322 Z" fill="#cfcfcf" stroke="none"/><path d="M1040 1240 H1002 V1308 H1080 V1275 M1050 1268 L1095 1222 M1062 1220 H1097 V1255"/><g stroke="#6e6e6e"><circle cx="1250" cy="1250" r="30"/><path d="M1272 1272 L1312 1305" stroke-width="12"/></g><rect x="1434" y="1226" width="62" height="60"/><rect x="1462" y="1254" width="28" height="28" fill="#cfcfcf" stroke="none"/><path d="M1462 1290 V1306 H1518 V1250 H1500" stroke="#8a8a8a" stroke-width="7"/><path d="M1637 1225 V1262 H1672 M1658 1245 L1676 1262 L1658 1279"/><rect x="1688" y="1236" width="66" height="64"/><path d="M1703 1268 H1739 M1721 1250 V1286"/><rect x="1876" y="1226" width="82" height="82"/><path d="M1897 1267 H1937 M1917 1247 V1287"/><path d="M2086 1238 H2170 M2112 1236 V1218 H2144 V1236 M2096 1240 L2100 1305 H2156 L2160 1240 M2116 1252 V1292 M2128 1252 V1292 M2140 1252 V1292"/></g></svg>
<!-- p_bottom -->
<div class="a" style="left:210.9px;top:1320.4px;width:25.6px;height:25.6px;background:#c6c6c6;border-radius:50%;"></div>
<span class="t" style="left:218.6px;top:1324px;font-size:19.5px;line-height:19.5px;color:#535353;font-weight:700;transform:scaleX(0.8556);">?</span>
<span class="t dc" style="left:254.7px;top:1325px;font-size:17px;line-height:17px;color:#c2c2c2;font-weight:700;transform:scaleX(1.0078);">Cliquez</span>
<span class="t" style="left:324px;top:1325px;font-size:17.5px;line-height:17.5px;color:#c2c2c2;transform:scaleX(1.0015);">sur l’objet à sélectionner</span>
<span class="t" style="left:525.5px;top:1325px;font-size:17.5px;line-height:17.5px;color:#c2c2c2;transform:scaleX(0.8797);">|</span>
<span class="t dc" style="left:541.5px;top:1325px;font-size:17px;line-height:17px;color:#c2c2c2;font-weight:700;transform:scaleX(1.0264);">Maj+cliquez</span>
<span class="t" style="left:654px;top:1325px;font-size:17.5px;line-height:17.5px;color:#c2c2c2;transform:scaleX(0.9995);">pour sélectionner plusieurs objets</span>
<span class="t" style="left:927px;top:1325px;font-size:17.5px;line-height:17.5px;color:#c2c2c2;transform:scaleX(0.8797);">|</span>
<span class="t dc" style="left:942.8px;top:1325px;font-size:17px;line-height:17px;color:#c2c2c2;font-weight:700;transform:scaleX(1.0061);">Alt+faites glisser</span>
<span class="t" style="left:1098.7px;top:1325px;font-size:17.5px;line-height:17.5px;color:#c2c2c2;transform:scaleX(1.0110);">l’objet à dupliquer</span>
<div class="a" style="left:208.5px;top:1356px;width:120px;height:27.5px;background:#464646;border:1px solid #5c5c5c;border-bottom:none;border-radius:4px 4px 0 0;"></div>
<div class="a" style="left:297px;top:1357px;width:1px;height:27px;background:#5c5c5c;"></div>
<div class="a" style="left:336px;top:1356px;width:120px;height:27.5px;background:#464646;border:1px solid #5c5c5c;border-bottom:none;border-radius:4px 4px 0 0;"></div>
<div class="a" style="left:424.7px;top:1357px;width:1px;height:27px;background:#5c5c5c;"></div>
<div class="a" style="left:528.5px;top:1356px;width:103px;height:27.5px;background:#464646;border:1px solid #5c5c5c;border-bottom:none;border-radius:4px 4px 0 0;"></div>
<div class="a" style="left:599.7px;top:1357px;width:1px;height:27px;background:#5c5c5c;"></div>
<span class="t" style="left:214px;top:1364px;font-size:18.5px;line-height:18.5px;color:#f4f4f4;transform:scaleX(0.9825);">150%</span>
<span class="t" style="left:341px;top:1364px;font-size:18.5px;line-height:18.5px;color:#f4f4f4;transform:scaleX(1.0177);">0°</span>
<span class="t" style="left:534px;top:1364px;font-size:18.5px;line-height:18.5px;color:#f4f4f4;transform:scaleX(0.8255);">1</span>
<div class="a" style="left:704.5px;top:1356px;width:1px;height:28px;background:#494949;"></div>
<span class="t" style="left:845px;top:1365px;font-size:17.5px;line-height:17.5px;color:#c8c8c8;transform:scaleX(0.9556);">Sélection</span>
<div class="a" style="left:1054px;top:1356px;width:1px;height:28px;background:#494949;"></div>
<div class="a" style="left:1085px;top:1355px;width:941px;height:28px;background:#4a4a4a;"></div>
<svg width="2560" height="1393" style="left:0;top:0" viewBox="0 0 2560 1393"><path d="M305.7 1369.9 L311.5 1376.1 L317.3 1369.9" fill="none" stroke="#f0f0f0" stroke-width="2" stroke-linecap="round" stroke-linejoin="round"/><path d="M433.2 1369.9 L439 1376.1 L444.8 1369.9" fill="none" stroke="#f0f0f0" stroke-width="2" stroke-linecap="round" stroke-linejoin="round"/><path d="M608.7 1369.9 L614.5 1376.1 L620.3 1369.9" fill="none" stroke="#f0f0f0" stroke-width="2" stroke-linecap="round" stroke-linejoin="round"/><g fill="#6f6f6f"><rect x="472.500" y="1365" width="3" height="15"/><path d="M486.500 1365 V1380 L476.500 1372.500 Z"/><path d="M512 1365 V1380 L502 1372.500 Z"/><path d="M649 1365 V1380 L659 1372.500 Z"/><path d="M675 1365 V1380 L685 1372.500 Z"/><rect x="686" y="1365" width="3" height="15"/></g><path d="M1067 1363.500 V1380 L1077 1371.800 Z" fill="#d0d0d0"/><path d="M1103.500 1364 L1097.500 1370 L1103.500 1376" fill="none" stroke="#a8a8a8" stroke-width="1.800"/><path d="M2008 1364 L2014 1370 L2008 1376" fill="none" stroke="#a8a8a8" stroke-width="1.800"/><rect x="1537" y="1357" width="44.500" height="25.500" rx="12.700" fill="#626262"/></svg>
<div class="a" style="left:203px;top:1383px;width:1852px;height:1.5px;background:#3a3a3a;"></div>
</body></html>
